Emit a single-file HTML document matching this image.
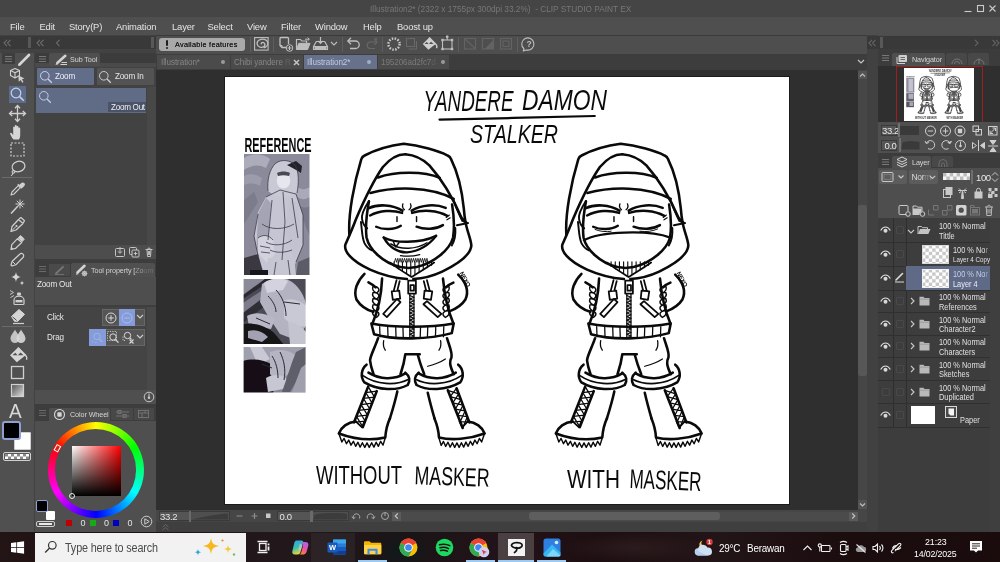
<!DOCTYPE html>
<html><head><meta charset="utf-8"><title>CLIP STUDIO PAINT EX</title>
<style>
*{box-sizing:border-box;margin:0;padding:0}
html,body{width:1000px;height:562px;overflow:hidden;background:#454545;font-family:"Liberation Sans",sans-serif;}
#root{will-change:transform;position:relative;width:1000px;height:562px;overflow:hidden;background:#454545;color:#ddd;font-size:10px}
.a{position:absolute}
.t{position:absolute;white-space:nowrap;line-height:1}
svg{position:absolute;overflow:visible}
.ic{stroke:#c8c8c8;fill:none;stroke-width:1.2;stroke-linecap:round;stroke-linejoin:round}
.mi{font-size:9.4px;letter-spacing:-0.15px;color:#e4e4e4}
.lt{font-size:9px;color:#e0e0e0;transform:scaleX(0.82);transform-origin:0 0}
.tb{font-size:9px;letter-spacing:-0.1px;color:#868686;transform:scaleX(0.9);transform-origin:0 0}
.nx{transform:scaleX(0.9);transform-origin:0 0}
.nx2{transform:scaleX(0.93);transform-origin:0 0}

</style></head><body><div id="root">
<!-- ===== title bar ===== -->
<div class="a" style="left:0;top:0;width:1000px;height:17px;background:#454545"></div>
<div class="t" style="left:370px;top:4.500px;font-size:9.300px;color:#777;transform:scaleX(0.890);transform-origin:0 0">Illustration2* (2322 x 1755px 300dpi 33.2%)&nbsp; - CLIP STUDIO PAINT EX</div>
<svg style="left:960px;top:2px" width="40" height="14"><g stroke="#c9c9c9" stroke-width="1.1" fill="none"><path d="M4.500 9.500h7"/><rect x="17.500" y="3.500" width="6" height="6"/><path d="M29.500 3.500l6 6M35.500 3.500l-6 6"/></g></svg>
<!-- ===== menu bar ===== -->
<div class="a" style="left:0;top:16.700px;width:1000px;height:18.300px;background:#4f4f4f"></div>
<div class="t mi" style="left:10px;top:21.500px">File</div>
<div class="t mi" style="left:39.500px;top:21.500px">Edit</div>
<div class="t mi" style="left:69px;top:21.500px">Story(P)</div>
<div class="t mi" style="left:116px;top:21.500px">Animation</div>
<div class="t mi" style="left:172px;top:21.500px">Layer</div>
<div class="t mi" style="left:207.500px;top:21.500px">Select</div>
<div class="t mi" style="left:247px;top:21.500px">View</div>
<div class="t mi" style="left:281px;top:21.500px">Filter</div>
<div class="t mi" style="left:315px;top:21.500px">Window</div>
<div class="t mi" style="left:363px;top:21.500px">Help</div>
<div class="t mi" style="left:397px;top:21.500px">Boost up</div>

<!-- ===== command bar ===== -->
<div class="a" style="left:156px;top:35px;width:711px;height:19px;background:#4e4e4e"></div>
<div class="a" style="left:156px;top:35px;width:711px;height:1px;background:#3a3a3a"></div>
<div class="a" style="left:159px;top:37.500px;width:86px;height:13.500px;border-radius:3px;background:#a9a9a9"></div>
<div class="a" style="left:165.500px;top:40px;width:2px;height:6px;border-radius:1px;background:#1e1e1e"></div>
<div class="a" style="left:165.500px;top:47px;width:2px;height:2px;border-radius:1px;background:#1e1e1e"></div>
<div class="t nx2" style="left:175px;top:40.500px;font-size:7.800px;letter-spacing:0.300px;color:#1f1f1f;text-shadow:0 0 0.500px #1f1f1f">Available features</div>
<div class="a" style="left:250px;top:37px;width:1px;height:15px;background:#5e5e5e"></div>
<div class="a" style="left:273px;top:37px;width:1px;height:15px;background:#5e5e5e"></div>
<div class="a" style="left:342px;top:37px;width:1px;height:15px;background:#5e5e5e"></div>
<div class="a" style="left:382px;top:37px;width:1px;height:15px;background:#5e5e5e"></div>
<div class="a" style="left:458px;top:37px;width:1px;height:15px;background:#5e5e5e"></div>
<div class="a" style="left:517px;top:37px;width:1px;height:15px;background:#5e5e5e"></div>
<!-- csp spiral -->
<svg style="left:254px;top:37.300px" width="15" height="14" viewBox="0 0 15 14"><rect x="0.600" y="0.600" width="13.500" height="12.500" fill="none" stroke="#bebebe" stroke-width="1.100"/><path d="M7.600 7.300c-1.100-1.200 1.100-2.500 2.400-.9 1.500 1.800-1.100 4-3.800 3.200-2.900-.9-3.300-4.500-.5-6 2.700-1.400 6.500-.6 7.100 1.900.5 2.200-1.300 4.200-3.400 4.800" fill="none" stroke="#bebebe" stroke-width="1.100" transform="translate(-1.400,-1.200) scale(1.180)"/></svg>
<!-- new file -->
<svg style="left:278px;top:36.300px" width="17" height="16" viewBox="0 0 17 16"><path d="M8.500 11.500H4L2 9.500V2.500a1 1 0 0 1 1-1h6.500a1 1 0 0 1 1 1V8" fill="none" stroke="#c0c0c0" stroke-width="1.300"/><path d="M2 9.500h2v2" fill="none" stroke="#c0c0c0" stroke-width="1"/><circle cx="11.500" cy="12" r="3.300" fill="#4e4e4e" stroke="#c0c0c0" stroke-width="1"/><path d="M11.500 10v4M9.500 12h4" stroke="#c0c0c0" stroke-width="1.100"/></svg>
<!-- open folder -->
<svg style="left:295px;top:36.300px" width="17" height="16" viewBox="0 0 17 16"><path d="M1.500 13.500V3.500h4l1.200 1.500h4.800v2" fill="none" stroke="#bebebe" stroke-width="1.200"/><path d="M1.500 13.500l2.300-6.200h11.200l-2.400 6.200z" fill="#bebebe" stroke="#bebebe" stroke-width="1" stroke-linejoin="round"/><path d="M10 3.200h4.200M12.600 1.600l1.700 1.600-1.700 1.600" fill="none" stroke="#bebebe" stroke-width="1"/></svg>
<!-- save -->
<svg style="left:312px;top:36.300px" width="17" height="16" viewBox="0 0 17 16"><path d="M1.500 13.500v-3l2.800-5h8.400l2.800 5v3z" fill="none" stroke="#bebebe" stroke-width="1.200" stroke-linejoin="round"/><path d="M1.500 10.500h14" stroke="#bebebe" stroke-width="1"/><rect x="2.500" y="11" width="12" height="2" fill="#bebebe"/><path d="M8.500 1v6M6.300 5l2.200 2.300L10.700 5" fill="none" stroke="#bebebe" stroke-width="1.200"/></svg>
<svg style="left:330px;top:41.300px" width="8" height="6" viewBox="0 0 8 6"><path d="M1 1l3 3 3-3" fill="none" stroke="#bebebe" stroke-width="1.100"/></svg>
<!-- undo / redo -->
<svg style="left:346px;top:36.300px" width="16" height="16" viewBox="0 0 16 16"><path d="M2 5h7.500a3.700 3.700 0 0 1 0 7.500H4" fill="none" stroke="#bebebe" stroke-width="1.300"/><path d="M5 1.800L1.800 5 5 8.200" fill="none" stroke="#bebebe" stroke-width="1.300"/></svg>
<svg style="left:364px;top:36.300px" width="16" height="16" viewBox="0 0 16 16"><path d="M13 6H6.500a3.200 3.200 0 0 0 0 6.500H11" fill="none" stroke="#686868" stroke-width="1.200"/><path d="M10.500 3.200L13 6l-2.500 2.800" fill="none" stroke="#686868" stroke-width="1.200"/><path d="M12 1.500v3M10.500 3h3" stroke="#686868" stroke-width="0.900"/></svg>
<!-- spinner -->
<svg style="left:386px;top:36.300px" width="16" height="16" viewBox="0 0 16 16"><circle cx="8" cy="8" r="5.600" fill="none" stroke="#c9c9c9" stroke-width="2.400" stroke-dasharray="1.500 1.430"/></svg>
<!-- dim copy -->
<svg style="left:405px;top:37.300px" width="15" height="14" viewBox="0 0 15 14"><rect x="1.500" y="1.500" width="8" height="8" fill="none" stroke="#686868" stroke-width="1.100"/><path d="M11.500 4v8h-8" fill="none" stroke="#686868" stroke-width="1.100"/></svg>
<!-- fill bucket -->
<svg style="left:421px;top:36.300px" width="17" height="16" viewBox="0 0 17 16"><path d="M8.200 1.500L1.800 8l5.600 5.800L14.600 8z" fill="#cfcfcf"/><path d="M3.500 8l2.300-2 2 2.200 2.200-2.400 2.500 2.200z" fill="#4e4e4e"/><path d="M8.200 1.500l6.400 6.500c1.200 1 1.600 2.600 1 4.200" fill="none" stroke="#cfcfcf" stroke-width="1.300"/></svg>
<!-- transform -->
<svg style="left:440px;top:35.300px" width="16" height="17" viewBox="0 0 16 17"><rect x="2.500" y="5" width="9.500" height="9" fill="none" stroke="#bebebe" stroke-width="1.100"/><path d="M7.200 1.500v3.500" stroke="#bebebe" stroke-width="1.100"/><g fill="#bebebe"><rect x="1.300" y="3.800" width="2.400" height="2.400"/><rect x="10.800" y="3.800" width="2.400" height="2.400"/><rect x="1.300" y="12.800" width="2.400" height="2.400"/><rect x="10.800" y="12.800" width="2.400" height="2.400"/><rect x="6" y="0.500" width="2.400" height="2.400"/></g></svg>
<!-- dim 3 icons -->
<svg style="left:463px;top:37.300px" width="52" height="14" viewBox="0 0 52 14"><g fill="none" stroke="#636363" stroke-width="1.100"><rect x="1.500" y="1.500" width="11" height="10.500"/><path d="M1.500 1.500l11 10.500"/><rect x="19.500" y="1.500" width="11" height="10.500"/><rect x="37.500" y="1.500" width="11" height="10.500"/><rect x="40" y="4" width="6" height="5.500"/></g><path d="M30.500 3v9h-9z" fill="#636363"/></svg>
<!-- help -->
<svg style="left:521px;top:36.300px" width="16" height="16" viewBox="0 0 16 16"><path d="M3 12.800A6.100 6.100 0 1 1 5.500 14l-3.300.9z" fill="none" stroke="#bebebe" stroke-width="1.100" stroke-linejoin="round"/><text x="8" y="11.300" font-family="Liberation Sans, sans-serif" font-size="8.500" font-weight="bold" fill="#bebebe" text-anchor="middle">?</text></svg>

<!-- ===== tab bar ===== -->
<div class="a" style="left:156px;top:54px;width:711px;height:16px;background:#3d3d3d"></div>
<div class="a" style="left:157px;top:55px;width:73px;height:14px;background:#4b4b4b"></div>
<div class="a" style="left:231px;top:55px;width:72px;height:14px;background:#4b4b4b"></div>
<div class="a" style="left:304px;top:55px;width:73px;height:14px;background:#67718c"></div>
<div class="a" style="left:378px;top:55px;width:71px;height:14px;background:#4b4b4b"></div>
<div class="t tb" style="left:160.500px;top:57.500px">Illustration*</div>
<div class="a" style="left:221px;top:60px;width:4px;height:4px;border-radius:2px;background:#9a9a9a"></div>
<div class="t tb" style="left:233.500px;top:57.500px">Chibi yandere <span style="color:#626262">R</span></div>
<svg style="left:293px;top:59px" width="7" height="7" viewBox="0 0 7 7"><path d="M1 1l5 5M6 1L1 6" stroke="#c4c4c4" stroke-width="1.500"/></svg>
<div class="t tb" style="left:307px;top:57.500px;color:#c3cae0">Illustration2*</div>
<div class="a" style="left:367px;top:60px;width:4px;height:4px;border-radius:2px;background:#a4adc8"></div>
<div class="t tb" style="left:380.500px;top:57.500px;color:#7a7a7a">195206ad2fc7<span style="color:#5e5e5e">d</span></div>
<div class="a" style="left:440.500px;top:60px;width:4px;height:4px;border-radius:2px;background:#9a9a9a"></div>
<svg style="left:857px;top:59px" width="8" height="6" viewBox="0 0 8 6"><path d="M1 1l3 3 3-3" fill="none" stroke="#c6c6c6" stroke-width="1.200"/></svg>

<!-- ===== left tool palette ===== -->
<div class="a" style="left:0;top:35px;width:156px;height:497px;background:#424242"></div>
<div class="a" style="left:0;top:36px;width:156px;height:13px;background:#393939"></div>
<div class="a" style="left:28px;top:37px;width:3px;height:11px;background:#585858"></div>
<div class="a" style="left:150.500px;top:37px;width:3px;height:11px;background:#585858"></div>
<svg style="left:3px;top:39px" width="60" height="8" viewBox="0 0 60 8"><g fill="none" stroke="#6c6c6c" stroke-width="1.100"><path d="M4 .8L1 4l3 3.200M7.500 .8L4.500 4l3 3.200"/><path d="M37 .8L34 4l3 3.200M40.500 .8L37.500 4l3 3.200"/><path d="M56.500 .8L53.500 4l3 3.200"/></g></svg>
<div class="a" style="left:0;top:53px;width:34px;height:479px;background:#505050"></div>
<div class="a" style="left:2px;top:53px;width:13px;height:11px;background:#3e3e3e"></div>
<svg style="left:4px;top:55px" width="9" height="8" viewBox="0 0 9 8"><path d="M1 1.500h7M1 4h7M1 6.500h7" stroke="#7f7f7f" stroke-width="0.900"/></svg>
<!-- pen tab icon -->
<svg style="left:16px;top:52px" width="17" height="15" viewBox="0 0 17 15"><path d="M3.500 12.500L13 3" stroke="#d6d6d6" stroke-width="2.600" stroke-linecap="round"/><path d="M2 14l1-2.500 1.500 1.500z" fill="#d6d6d6"/></svg>

<!-- selected tool bg -->
<div class="a" style="left:8.500px;top:86px;width:17px;height:17px;background:#5e6b8b"></div>
<!-- tool icons -->
<!-- 3d object -->
<svg style="left:8px;top:66px" width="20" height="19" viewBox="0 0 20 19"><path d="M7 2.500l4.500 2v5L7 12l-4.500-2.500v-5z M2.500 4.500L7 6.800l4.500-2.300M7 6.800V12" fill="none" stroke="#d0d0d0" stroke-width="1.100" stroke-linejoin="round"/><path d="M10.500 9.500l6 3-2.600.8 1.600 2.800-1.300.7-1.500-2.800-2 1.700z" fill="#d0d0d0"/></svg>
<!-- zoom -->
<svg style="left:9px;top:86px" width="17" height="17" viewBox="0 0 17 17"><circle cx="7" cy="7" r="4.800" fill="none" stroke="#c9d2ea" stroke-width="1.200"/><path d="M10.600 10.600l4.200 4.200" stroke="#c9d2ea" stroke-width="1.500"/></svg>
<!-- move -->
<svg style="left:8px;top:104px" width="19" height="19" viewBox="0 0 19 19"><path d="M9.500 2v15M2 9.500h15" stroke="#d0d0d0" stroke-width="1.300"/><path d="M7 4.200L9.500 1.500 12 4.200M7 14.800l2.500 2.700 2.500-2.700M4.200 7L1.500 9.500 4.200 12M14.800 7l2.700 2.500-2.700 2.500" fill="none" stroke="#d0d0d0" stroke-width="1.300"/></svg>
<!-- hand -->
<svg style="left:9px;top:123px" width="17" height="18" viewBox="0 0 17 18"><path d="M4.500 16.500c-1.500-1.500-2.700-3.800-3.300-5.500-.4-1.200 1-1.700 1.700-.7l1.300 1.900V4.300c0-1.200 1.700-1.200 1.700 0V3c0-1.300 1.800-1.300 1.800 0v1c0-1.300 1.800-1.300 1.800 0v1.400c0-1.200 1.700-1.200 1.700 0v6.800c0 1.800-.5 3-1.200 4.300z" fill="#d6d6d6"/></svg>
<!-- select rect -->
<svg style="left:9px;top:141px" width="17" height="17" viewBox="0 0 17 17"><rect x="2" y="2" width="13" height="13" fill="none" stroke="#d0d0d0" stroke-width="1.200" stroke-dasharray="2 1.500"/></svg>
<!-- lasso -->
<svg style="left:9px;top:159px" width="18" height="18" viewBox="0 0 18 18"><ellipse cx="9.500" cy="7.500" rx="6.500" ry="5.200" fill="none" stroke="#d0d0d0" stroke-width="1.200" transform="rotate(-18 9.500 7.500)"/><path d="M5 11.500c-1.500.2-2.300 1.400-1.600 2.300.8.900 2.300.2 2.400-1.200M4 14c-.3 1.300-1 2.200-2 2.700" fill="none" stroke="#d0d0d0" stroke-width="1.100"/></svg>
<div class="a" style="left:2px;top:177px;width:30px;height:1px;background:#6a6a6a"></div>
<!-- eyedropper -->
<svg style="left:9px;top:180px" width="17" height="17" viewBox="0 0 17 17"><path d="M2 15l1-3 6.300-6.300 2 2L5 14z" fill="none" stroke="#d0d0d0" stroke-width="1.100" stroke-linejoin="round"/><path d="M8.800 4.200l4 4M10.500 5.800l2.300-2.300a1.400 1.400 0 0 1 2 2L12.500 7.800" fill="#d0d0d0" stroke="#d0d0d0" stroke-width="1.400" stroke-linejoin="round"/></svg>
<!-- magic wand -->
<svg style="left:9px;top:198px" width="17" height="17" viewBox="0 0 17 17"><path d="M2 15.500l7-7.500" stroke="#d0d0d0" stroke-width="1.500"/><path d="M11 1.500v9M6.500 6h9M7.800 2.800l6.400 6.400M14.200 2.800L7.800 9.200" stroke="#d0d0d0" stroke-width="1"/></svg>
<!-- pen -->
<svg style="left:9px;top:216px" width="17" height="17" viewBox="0 0 17 17"><path d="M2 15.500l1-5 6.500-7 4.500 4-7 6.500z" fill="none" stroke="#d0d0d0" stroke-width="1.200" stroke-linejoin="round"/><path d="M2 15.500l4.800-4.800" stroke="#d0d0d0" stroke-width="1"/><circle cx="7.500" cy="10" r="1.100" fill="#d0d0d0"/><path d="M10 2.800l2-1.300 3.500 3.200-1.300 2.300" fill="none" stroke="#d0d0d0" stroke-width="1.200" stroke-linejoin="round"/></svg>
<!-- pencil/brush -->
<svg style="left:9px;top:234px" width="17" height="17" viewBox="0 0 17 17"><path d="M2 15.500l.8-4.800 5.700-6 4.200 3.800-6 5.800z" fill="none" stroke="#d0d0d0" stroke-width="1.200" stroke-linejoin="round"/><path d="M9 4.200l2.500-2.700 3.800 3.500-2.300 2.800" fill="#d0d0d0" stroke="#d0d0d0" stroke-width="1" stroke-linejoin="round"/><path d="M2 15.500l2.500-.6-1.900-1.800z" fill="#d0d0d0"/></svg>
<!-- marker pill -->
<svg style="left:9px;top:252px" width="17" height="17" viewBox="0 0 17 17"><path d="M3 14l-1-1 1.200-3.800 7.500-7a2.300 2.300 0 0 1 3.300 3.300l-7.200 7.300z" fill="none" stroke="#d0d0d0" stroke-width="1.200" stroke-linejoin="round"/><path d="M3.500 9.500l3.200 3.200" stroke="#d0d0d0" stroke-width="1"/></svg>
<!-- sparkle -->
<svg style="left:9px;top:270px" width="17" height="17" viewBox="0 0 17 17"><path d="M7 1.500c.4 3.500 1.200 4.600 5 5.500-3.800.9-4.600 2-5 5.500-.4-3.500-1.200-4.600-5-5.500 3.800-.9 4.600-2 5-5.500z" fill="#d6d6d6"/><path d="M13 10.500c.2 1.700.7 2.200 2.500 2.600-1.800.4-2.300.9-2.500 2.600-.2-1.700-.7-2.200-2.500-2.600 1.800-.4 2.300-.9 2.500-2.600z" fill="#d6d6d6"/></svg>
<!-- airbrush -->
<svg style="left:8px;top:288px" width="19" height="18" viewBox="0 0 19 18"><path d="M2 2.500l3.500 2L2 6.500M2.500 9.500L6 7.500" fill="none" stroke="#d0d0d0" stroke-width="0.900"/><rect x="9" y="4.500" width="4" height="3" rx="1" fill="#d0d0d0"/><path d="M6 15.500v-3.500c0-2 2-3.800 5-3.800s5 1.800 5 3.800v3.500c0 .6-.4 1-1 1H7c-.6 0-1-.4-1-1z" fill="none" stroke="#d0d0d0" stroke-width="1.200"/><rect x="7.500" y="12" width="7" height="2.400" fill="#d0d0d0"/></svg>
<!-- eraser -->
<svg style="left:9px;top:307px" width="18" height="18" viewBox="0 0 18 18"><path d="M2.500 9.500L10 2.500l5.500 4.800-6.700 7H5.500z" fill="#d6d6d6" stroke="#d6d6d6" stroke-width="1" stroke-linejoin="round"/><path d="M3.500 9.800l4.200 3.700" stroke="#505050" stroke-width="1"/><path d="M4 16.500h11" stroke="#d0d0d0" stroke-width="1.200"/></svg>
<div class="a" style="left:2px;top:326px;width:30px;height:1px;background:#6a6a6a"></div>
<!-- blend -->
<svg style="left:9px;top:328px" width="18" height="18" viewBox="0 0 18 18"><path d="M6 1.500c1 2.500 4.500 5.500 4.500 9a4.500 4.500 0 0 1-9 0c0-3.500 3.500-6.500 4.500-9z" fill="#c4c4c4"/><path d="M12 1.500c1 2.500 4.500 5.500 4.500 9a4.500 4.500 0 0 1-9 0c0-3.500 3.500-6.500 4.500-9z" fill="#d8d8d8" opacity="0.900"/></svg>
<!-- fill -->
<svg style="left:8px;top:346px" width="20" height="18" viewBox="0 0 20 18"><path d="M10 1.500L2 9.300l6.800 7L17.600 9.300z" fill="#d6d6d6"/><path d="M4.500 9.300l2.800-2.600 2.400 2.800 2.800-3 3 2.800z" fill="#505050"/><path d="M10 1.500l7.600 7.800c1.200 1.300 1.600 2.800 1 4.400" fill="none" stroke="#d6d6d6" stroke-width="1.400"/></svg>
<!-- rectangle -->
<svg style="left:9px;top:364px" width="17" height="17" viewBox="0 0 17 17"><rect x="2.500" y="2.500" width="12" height="12" fill="none" stroke="#d0d0d0" stroke-width="1.300"/></svg>
<!-- gradient -->
<svg style="left:9px;top:382px" width="17" height="17" viewBox="0 0 17 17"><defs><linearGradient id="gg" x1="0" y1="0" x2="1" y2="1"><stop offset="0" stop-color="#505050"/><stop offset="1" stop-color="#e0e0e0"/></linearGradient></defs><rect x="2.500" y="2.500" width="12" height="12" fill="url(#gg)" stroke="#d0d0d0" stroke-width="1.200"/></svg>
<!-- text A -->
<div class="t" style="left:9px;top:401px;font-size:20px;color:#d8d8d8;transform:scaleX(.95);transform-origin:0 0">A</div>
<!-- colour swatches -->
<div class="a" style="left:14px;top:432px;width:17px;height:18px;background:#fff;border:1px solid #cfcfcf;border-radius:1px"></div>
<div class="a" style="left:2px;top:421px;width:19px;height:19px;background:#000;border:2px solid #8ea0cf;border-radius:3px"></div>
<div class="a" style="left:3px;top:452px;width:28px;height:9px;border:1px solid #cfcfcf;border-radius:2px;background:#5a5a5a"></div>
<svg style="left:5px;top:454px" width="24" height="5" viewBox="0 0 24 5"><rect width="24" height="5" fill="#fff"/><g fill="#8a8a8a"><rect x="0" y="0" width="3" height="2.500"/><rect x="6" y="0" width="3" height="2.500"/><rect x="12" y="0" width="3" height="2.500"/><rect x="18" y="0" width="3" height="2.500"/><rect x="3" y="2.500" width="3" height="2.500"/><rect x="9" y="2.500" width="3" height="2.500"/><rect x="15" y="2.500" width="3" height="2.500"/><rect x="21" y="2.500" width="3" height="2.500"/></g></svg>

<!-- ===== sub tool panel ===== -->
<div class="a" style="left:35px;top:53px;width:121px;height:13px;background:#3c3c3c"></div>
<div class="a" style="left:35px;top:63px;width:121px;height:4px;background:#4a4a4a"></div>
<div class="a" style="left:35px;top:67px;width:121px;height:178px;background:#424242"></div>
<svg style="left:38px;top:55px" width="9" height="8" viewBox="0 0 9 8"><path d="M1 1.500h7M1 4h7M1 6.500h7" stroke="#7f7f7f" stroke-width="0.900"/></svg>
<div class="a" style="left:49px;top:53px;width:51px;height:13px;background:#4f4f4f;border-radius:2px 2px 0 0"></div>
<!-- sub tool tab icon -->
<svg style="left:54px;top:53px" width="15" height="13" viewBox="0 0 15 13"><path d="M3.500 9.800L11.300 2.800" stroke="#d2d2d2" stroke-width="2.600" stroke-linecap="round"/><path d="M1.500 12l1-2.600 1.800 1.800z" fill="#d2d2d2"/><path d="M7.500 9.500h5.500M6.500 11.500h6.500" stroke="#d2d2d2" stroke-width="1" fill="none"/></svg>
<div class="t nx" style="left:69.500px;top:56px;font-size:8px;color:#d6d6d6;letter-spacing:-0.1px">Sub Tool</div>
<!-- group buttons -->
<div class="a" style="left:37px;top:68px;width:57px;height:17px;background:#626d89;border-radius:1px"></div>
<div class="a" style="left:97px;top:68px;width:57px;height:17px;background:#535353;border-radius:1px"></div>
<svg style="left:39px;top:70px" width="14" height="14" viewBox="0 0 14 14"><circle cx="5.800" cy="5.800" r="4.300" fill="none" stroke="#cbd3ea" stroke-width="1"/><path d="M9 9l3.800 3.800" stroke="#cbd3ea" stroke-width="1.300"/></svg>
<svg style="left:98px;top:70px" width="14" height="14" viewBox="0 0 14 14"><circle cx="5.800" cy="5.800" r="4.300" fill="none" stroke="#cfcfcf" stroke-width="1"/><path d="M9 9l3.800 3.800" stroke="#cfcfcf" stroke-width="1.300"/></svg>
<div class="t nx" style="left:54.500px;top:72px;font-size:9px;color:#eef0f8;letter-spacing:-0.2px">Zoom</div>
<div class="t nx" style="left:114.500px;top:72px;font-size:9px;color:#e8e8e8;letter-spacing:-0.2px">Zoom In</div>
<div class="a" style="left:147px;top:87px;width:9px;height:158px;background:#484848"></div>
<!-- list item -->
<div class="a" style="left:36px;top:88px;width:110px;height:25px;background:#606b86"></div>
<svg style="left:38px;top:90px" width="14" height="14" viewBox="0 0 14 14"><circle cx="5.800" cy="5.800" r="4.300" fill="none" stroke="#c3cce4" stroke-width="1"/><path d="M9 9l3.800 3.800" stroke="#c3cce4" stroke-width="1.300"/></svg>
<div class="a" style="left:108px;top:102px;width:38px;height:10px;background:#4b5369"></div>
<div class="t nx" style="left:110.500px;top:102.500px;font-size:9px;color:#f0f0f0;letter-spacing:-0.3px">Zoom Out</div>
<!-- footer -->
<div class="a" style="left:35px;top:245px;width:121px;height:14px;background:#4d4d4d"></div>
<svg style="left:114px;top:246px" width="42" height="12" viewBox="0 0 42 12"><g fill="none" stroke="#c4c4c4" stroke-width="1"><rect x="1.500" y="2.500" width="9" height="8" rx="1"/><path d="M6 1v6M4 5.300l2 2 2-2"/><rect x="15.500" y="1.500" width="7" height="7" rx="1"/><rect x="18" y="4" width="7" height="7" rx="1" fill="#4d4d4d"/><path d="M21.500 5.800v3.500M19.800 7.500h3.500"/><path d="M31.500 3.500h7M33 3.500l.5 7h3l.5-7M33.800 3.300c0-1.800 2.400-1.800 2.400 0M34.400 5v4M35.600 5v4"/></g></svg>

<!-- ===== tool property ===== -->
<div class="a" style="left:35px;top:259px;width:121px;height:4px;background:#3d3d3d"></div>
<div class="a" style="left:35px;top:263px;width:121px;height:14px;background:#3d3d3d"></div>
<svg style="left:38px;top:265px" width="9" height="8" viewBox="0 0 9 8"><path d="M1 1.500h7M1 4h7M1 6.500h7" stroke="#6f6f6f" stroke-width="0.900"/></svg>
<div class="a" style="left:49px;top:264px;width:21px;height:12px;background:#4a4a4a"></div>
<svg style="left:54px;top:265px" width="12" height="10" viewBox="0 0 12 10"><path d="M2 8.500L9 1.800" stroke="#777" stroke-width="1.800" stroke-linecap="round"/><path d="M1 9.500h9" stroke="#777" stroke-width="0.800"/></svg>
<div class="a" style="left:71px;top:263px;width:84px;height:14px;background:#505050;border-radius:2px 2px 0 0"></div>
<svg style="left:75px;top:263px" width="14" height="14" viewBox="0 0 14 14"><path d="M2.500 9.500L9.500 2.800" stroke="#d2d2d2" stroke-width="2.600" stroke-linecap="round"/><path d="M1 12l1-2.500 1.600 1.600z" fill="#d2d2d2"/><circle cx="9.500" cy="10.500" r="2" fill="none" stroke="#d2d2d2" stroke-width="1"/><path d="M9.500 7.500v6M6.500 10.500h6M7.400 8.400l4.200 4.200M11.600 8.400l-4.200 4.200" stroke="#d2d2d2" stroke-width="0.700"/></svg>
<div class="t nx" style="left:91px;top:266.500px;font-size:8px;color:#d2d2d2;letter-spacing:-0.1px">Tool property [<span style="color:#9a9a9a">Zo</span><span style="color:#707070">om</span></div>
<div class="a" style="left:35px;top:277px;width:121px;height:28px;background:#4e4e4e"></div>
<div class="t nx" style="left:36.500px;top:279.500px;font-size:9px;color:#e6e6e6;letter-spacing:-0.2px">Zoom Out</div>
<div class="a" style="left:35px;top:305px;width:121px;height:2px;background:#3f3f3f"></div>
<div class="a" style="left:35px;top:307px;width:121px;height:83px;background:#444444"></div>
<div class="a" style="left:147px;top:307px;width:9px;height:83px;background:#494949"></div>
<div class="t nx" style="left:47px;top:313px;font-size:9px;color:#e6e6e6;letter-spacing:-0.2px">Click</div>
<div class="t nx" style="left:47px;top:333px;font-size:9px;color:#e6e6e6;letter-spacing:-0.2px">Drag</div>
<!-- click buttons -->
<div class="a" style="left:102px;top:309px;width:43px;height:17px;background:#555;border:1px solid #666"></div>
<div class="a" style="left:118.500px;top:309px;width:16.500px;height:17px;background:#869cd8"></div>
<svg style="left:104px;top:311px" width="14" height="14" viewBox="0 0 14 14"><circle cx="7" cy="7" r="5" fill="none" stroke="#d8d8d8" stroke-width="1"/><path d="M7 4.200v5.600M4.200 7h5.600" stroke="#d8d8d8" stroke-width="1"/></svg>
<svg style="left:120px;top:311px" width="14" height="14" viewBox="0 0 14 14"><circle cx="7" cy="7" r="5" fill="none" stroke="#a9bcf0" stroke-width="1"/><path d="M4.200 7h5.600" stroke="#a9bcf0" stroke-width="1"/></svg>
<svg style="left:136px;top:314px" width="8" height="6" viewBox="0 0 8 6"><path d="M1 1l3 3 3-3" fill="none" stroke="#d0d0d0" stroke-width="1.100"/></svg>
<!-- drag buttons -->
<div class="a" style="left:89px;top:329px;width:56px;height:17px;background:#555;border:1px solid #666"></div>
<div class="a" style="left:89px;top:329px;width:16.500px;height:17px;background:#869cd8"></div>
<svg style="left:90px;top:330px" width="15" height="15" viewBox="0 0 15 15"><circle cx="7" cy="6.500" r="3.200" fill="none" stroke="#9db2ee" stroke-width="1"/><path d="M9.300 9l3 3" stroke="#9db2ee" stroke-width="1.200"/><path d="M2 11.500h1.500M5 12.500h1.500" stroke="#9db2ee" stroke-width="0.800"/></svg>
<svg style="left:106px;top:330px" width="15" height="15" viewBox="0 0 15 15"><rect x="1.500" y="1.500" width="9" height="9" fill="none" stroke="#d0d0d0" stroke-width="0.900" stroke-dasharray="1.200 1.200"/><circle cx="7" cy="7" r="3.200" fill="none" stroke="#d8d8d8" stroke-width="1"/><path d="M9.300 9.500l3.200 3.200" stroke="#d8d8d8" stroke-width="1.200"/></svg>
<svg style="left:121px;top:330px" width="15" height="15" viewBox="0 0 15 15"><circle cx="6.500" cy="5.500" r="3.200" fill="none" stroke="#d8d8d8" stroke-width="1"/><path d="M9 8l1.500 1.500" stroke="#d8d8d8" stroke-width="1.100"/><path d="M2 6.500v4h3" fill="none" stroke="#d0d0d0" stroke-width="0.900" stroke-dasharray="1.200 1.200"/><path d="M8.500 9.500l4 4M12.500 9.500l-4 4" stroke="#d8d8d8" stroke-width="1.100"/></svg>
<svg style="left:136px;top:334px" width="8" height="6" viewBox="0 0 8 6"><path d="M1 1l3 3 3-3" fill="none" stroke="#d0d0d0" stroke-width="1.100"/></svg>
<!-- footer 2 -->
<div class="a" style="left:35px;top:390px;width:121px;height:14px;background:#4f4f4f"></div>
<svg style="left:143px;top:391px" width="12" height="12" viewBox="0 0 12 12"><circle cx="6" cy="6" r="4.800" fill="none" stroke="#c8c8c8" stroke-width="1"/><path d="M6 2.500v3.500" stroke="#c8c8c8" stroke-width="1"/><circle cx="6" cy="6.800" r="1.200" fill="#c8c8c8"/></svg>
<div class="a" style="left:35px;top:404px;width:121px;height:3px;background:#3d3d3d"></div>

<!-- ===== colour wheel panel ===== -->
<div class="a" style="left:35px;top:407px;width:121px;height:14px;background:#3d3d3d"></div>
<div class="a" style="left:35px;top:421px;width:121px;height:111px;background:#4f4f4f"></div>
<svg style="left:38px;top:409px" width="9" height="8" viewBox="0 0 9 8"><path d="M1 1.500h7M1 4h7M1 6.500h7" stroke="#6f6f6f" stroke-width="0.900"/></svg>
<div class="a" style="left:49px;top:408px;width:61px;height:13px;background:#4f4f4f;border-radius:2px 2px 0 0"></div>
<svg style="left:53px;top:408px" width="13" height="13" viewBox="0 0 13 13"><circle cx="6.500" cy="6.500" r="5" fill="none" stroke="#d6d6d6" stroke-width="1.100"/><rect x="4.300" y="4.300" width="4.400" height="4.400" rx="0.800" fill="#d6d6d6"/></svg>
<div class="t nx" style="left:69.500px;top:410.500px;font-size:8px;color:#d6d6d6;letter-spacing:-0.1px">Color Wheel</div>
<div class="a" style="left:111px;top:408px;width:22px;height:12px;background:#484848"></div>
<div class="a" style="left:134px;top:408px;width:20px;height:12px;background:#484848"></div>
<svg style="left:114px;top:409px" width="38" height="10" viewBox="0 0 38 10"><g fill="none" stroke="#767676" stroke-width="0.900"><path d="M2 3h13M2 7h13"/><rect x="4" y="1.500" width="3" height="3"/><rect x="9" y="5.500" width="3" height="3"/><rect x="24.500" y="1.500" width="10" height="7"/><path d="M24.500 4h10M28 4v4.500M31 1.500V4"/></g></svg>
<!-- wheel -->
<div class="a" style="left:47.500px;top:421.700px;width:96.600px;height:96.600px;border-radius:50%;background:conic-gradient(from 300deg,#ff0000,#ffff00,#00ff00,#00ffff,#0000ff,#ff00ff,#ff0000)"></div>
<div class="a" style="left:55.200px;top:429.400px;width:81.200px;height:81.200px;border-radius:50%;background:#4f4f4f"></div>
<div class="a" style="left:71.600px;top:446px;width:49.800px;height:49.500px;background:linear-gradient(to bottom,rgba(0,0,0,0),#000),linear-gradient(to right,#fff,#ff0000)"></div>
<div class="a" style="left:54px;top:445.500px;width:6.500px;height:5px;border:1.200px solid #fff;background:#e02018;transform:rotate(-60deg)"></div>
<div class="a" style="left:68.500px;top:492.500px;width:6px;height:6px;border-radius:50%;border:1px solid #e8e8e8"></div>
<!-- small swatches -->
<div class="a" style="left:45.500px;top:510.500px;width:9px;height:9px;background:#fff;border-radius:1px"></div>
<div class="a" style="left:36px;top:499.500px;width:12px;height:12px;background:#000;border:1.500px solid #8ea0cf;border-radius:2px"></div>
<div class="a" style="left:36px;top:521px;width:19px;height:6px;border:1px solid #d0d0d0;border-radius:2px"></div>
<div class="a" style="left:39px;top:523px;width:13px;height:2px;background:#e8e8e8"></div>
<div class="a" style="left:66px;top:520px;width:5.500px;height:5.500px;background:#c00000"></div>
<div class="a" style="left:90px;top:520px;width:5.500px;height:5.500px;background:#18a818"></div>
<div class="a" style="left:113px;top:520px;width:5.500px;height:5.500px;background:#0000c0"></div>
<div class="t" style="left:80.500px;top:518.500px;font-size:9px;color:#e4e4e4">0</div>
<div class="t" style="left:104px;top:518.500px;font-size:9px;color:#e4e4e4">0</div>
<div class="t" style="left:127.500px;top:518.500px;font-size:9px;color:#e4e4e4">0</div>
<svg style="left:140px;top:515px" width="13" height="13" viewBox="0 0 13 13"><circle cx="6.500" cy="6.500" r="5.300" fill="none" stroke="#cfcfcf" stroke-width="1"/><path d="M4.800 3.800v5.400l4.400-2.700z" fill="none" stroke="#cfcfcf" stroke-width="1" stroke-linejoin="round"/></svg>

<!-- ===== canvas area ===== -->
<div class="a" style="left:156px;top:70px;width:702px;height:440px;background:#2f2f2f"></div>
<div class="a" style="left:224px;top:76px;width:566px;height:428.500px;background:#1b1b1b"></div>
<div class="a" style="left:225px;top:77px;width:564px;height:426.500px;background:#fff"></div>
<!-- v scrollbar -->
<div class="a" style="left:858px;top:70px;width:9px;height:440px;background:#464646"></div>
<div class="a" style="left:858px;top:71px;width:9px;height:8px;background:#535353"></div>
<svg style="left:859px;top:72px" width="7" height="6" viewBox="0 0 7 6"><path d="M1 4.500l2.500-2.500L6 4.500" fill="none" stroke="#bdbdbd" stroke-width="1.200"/></svg>
<div class="a" style="left:858px;top:205px;width:9px;height:171px;background:#575757;border-radius:2px"></div>
<div class="a" style="left:858px;top:500px;width:9px;height:9px;background:#535353"></div>
<svg style="left:859px;top:502px" width="7" height="6" viewBox="0 0 7 6"><path d="M1 1.500l2.500 2.500L6 1.500" fill="none" stroke="#bdbdbd" stroke-width="1.200"/></svg>
<!-- bottom status bar -->
<div class="a" style="left:156px;top:510px;width:711px;height:12px;background:#464646"></div>
<div class="a" style="left:156px;top:522px;width:711px;height:10px;background:#3f3f3f"></div>
<div class="a" style="left:867px;top:35px;width:11px;height:497px;background:#414141"></div>
<svg style="left:0;top:0" width="1000" height="562" viewBox="0 0 1000 562">
<defs><filter id="bl" x="-5%" y="-5%" width="110%" height="110%"><feGaussianBlur stdDeviation="0.7"/></filter><clipPath id="c1"><rect x="244" y="154" width="65.500" height="121"/></clipPath><clipPath id="c2"><rect x="243.600" y="279" width="62" height="65"/></clipPath><clipPath id="c3"><rect x="243.600" y="347" width="62" height="45.500"/></clipPath></defs>
<g clip-path="url(#c1)"><g filter="url(#bl)"><rect x="242" y="152" width="70" height="125" fill="#8b8a9a"/><path d="M244 158c8-5 18-5 26 1l-4 9c-8-4-14-3-22 2z" fill="#adacbb"/><path d="M244 176c6-3 12-2 18 2l-2 8c-6-3-10-3-16-1z" fill="#9d9cac"/><path d="M296 186c5 4 9 4 14 1v10c-5 3-9 3-14-1z" fill="#aaa9b9"/><path d="M300 206c4 2 7 2 10 0v30c-4-8-8-18-10-30z" fill="#787789"/><path d="M244 200l10-8 4 10-14 22z" fill="#7c7b8c"/><path d="M266 197l14-7 16 4 7 21v30l-7 17-6 13h-28l-4-20-4-20 4-23z" fill="#c6c5d3"/><path d="M288 200l10 3 4 38-8 20-8-28z" fill="#c3c2d0"/><path d="M258 214l8-16 5 5-3 40-12 14z" fill="#a5a4b5"/><path d="M268 191c-1-10 1-22 8-28 6-4 14-3 19 2 4 6 4 18 2 28-8 6-20 6-29-2z" fill="#c9c8d5"/><ellipse cx="283.500" cy="180.500" rx="6.800" ry="8" fill="#e6e6ee"/><path d="M277 173c4-2 9-2 13 0l-1 3c-4-1-7-1-11 0z" fill="#4a4955"/><path d="M287 165l9-4 6 5-1 7c-4-3-9-5-14-8z" fill="#232229"/><path d="M258 238c5-4 11-3 15 2l2 14-8 9-9-10z" fill="#d2d1dc"/><path d="M268 258h26l2 17h-30z" fill="#c6c5d2"/><path d="M244 258l14-4 6 21h-20z" fill="#3a3942"/><path d="M250 270h18v5h-18z" fill="#18171c"/><path d="M298 262l12-5v18h-14z" fill="#5c5b67"/><g fill="none" stroke="#3c3b47" stroke-width="0.800"><path d="M266 197l14-7 16 4 7 21v30l-7 17M268 191c-1-10 1-22 8-28 6-4 14-3 19 2 4 6 4 18 2 28M283 192l2 30-3 38M262 224c8 6 22 6 32 0M266 242c6 4 18 4 26-2M258 214l-4 22 4 20M272 200l-4 40M292 198l6 40M270 250c6 3 14 3 22 0M276 262l-2 13M288 260l2 15M258 238c5-4 11-3 15 2M260 246l10 2M261 252l9 1"/></g></g></g>
<g clip-path="url(#c2)"><g filter="url(#bl)"><rect x="242" y="277" width="66" height="69" fill="#4c4b56"/><path d="M243 279h22l-22 20z" fill="#8b8a99"/><path d="M243 299l30-20h-8l-22 16z" fill="#2b2a31"/><path d="M243 303l36-24h10l-46 34z" fill="#7c7b8a"/><path d="M243 313l40-30 4 6-44 34z" fill="#2e2d35"/><path d="M262 284c8-6 22-8 30-2 8 6 12 14 14 22v22l-10 14-16-6-12-18-8-14z" fill="#b4b3c2"/><path d="M264 283c6-5 18-6 24-2l-5 9-16 3z" fill="#d3d2de"/><path d="M284 300c8-2 16 0 22 6v20c-8 2-16-2-22-8z" fill="#c9c8d5"/><path d="M247 316c8-5 20-3 28 3l-4 10-22-3z" fill="#b8b7c6"/><path d="M243 324c10-2 24 2 32 10l10 12h-42z" fill="#131217"/><path d="M243 338l30 8h-30z" fill="#131217"/><path d="M248 331c8-2 14 0 20 6l-6 5-14-4z" fill="#a3a2b2"/><path d="M288 322c7 0 13 4 18 10v12h-16z" fill="#c4c3d0"/><path d="M268 296c4 4 8 10 8 16M276 290c6 6 10 16 10 26M256 318l14 6M284 302l16 2" fill="none" stroke="#2a2930" stroke-width="1"/></g></g>
<g clip-path="url(#c3)"><g filter="url(#bl)"><rect x="242" y="345" width="66" height="50" fill="#878695"/><path d="M243 347h62v10l-30 10-32-6z" fill="#a09fae"/><path d="M250 347l12 0 8 12-12 6z" fill="#c9c8d5"/><path d="M243 361c10-3 22-1 30 4l4 12-4 16h-30z" fill="#121116"/><path d="M270 352c10-4 20-2 26 4l-4 14-14 14-8-10z" fill="#b5b4c3"/><path d="M266 378c6-4 14-4 20 0l2 10-20 4z" fill="#c7c6d3"/><path d="M296 352l10-5v18l-16 27h-8c5-14 9-28 14-40z" fill="#5f5e6b"/><path d="M301 368l5-4v28h-14z" fill="#a09fae"/><path d="M272 356c4 6 6 14 6 22M280 352c4 8 6 18 4 28M262 364l10 4" fill="none" stroke="#2a2930" stroke-width="1"/></g></g>
<g transform="translate(0,0)" fill="none" stroke="#0a0a0a" stroke-linecap="round" stroke-linejoin="round">
<g transform="translate(330,135) scale(0.16026)" stroke-width="16"><path d="M121,622 C112,500 150,300 195,152 Q200,135 216,128 C280,95 380,65 460,55 C560,65 680,100 734,128 Q750,135 756,152 C800,240 825,360 835,460 C838,500 842,525 846,545 C855,600 880,650 882,690 C878,735 830,790 700,852 C640,880 580,895 520,899" /><path d="M470,120 C430,120 380,140 330,200 C262,298 205,425 160,530 C140,585 115,640 96,683 C86,722 125,782 250,840 C340,880 430,895 480,899" /><path d="M470,120 C530,125 580,150 620,190 C700,280 770,400 820,515 L846,545" /><path d="M300,265 C400,230 580,222 685,268" /><path d="M252,362 C400,322 620,318 772,398" /></g>
<g transform="translate(330,195) scale(0.16026)" stroke-width="16"><path d="M243,40 C228,120 220,200 228,265 C245,340 330,425 440,450 Q490,460 540,450 C650,425 748,340 768,265 C778,200 775,140 762,60" /><path d="M243,37 C215,80 195,125 200,150 C205,180 215,195 232,208" stroke-width="12"/><path d="M193,168 C200,220 200,270 215,300 C228,325 245,338 262,345" stroke-width="12"/><path d="M772,36 C790,90 810,130 826,162 L862,175 L792,189" stroke-width="12"/><path d="M782,206 C785,250 775,290 760,315" stroke-width="12"/></g>
<g transform="translate(330,265) scale(0.16026)" stroke-width="16"><path d="M215,55 C170,100 145,160 165,215 C190,255 230,280 270,292" /><path d="M240,108 C260,118 275,130 285,140" /><path d="M800,60 C850,110 870,160 845,215 C820,255 780,275 748,288" /><path d="M770,110 C750,118 735,128 722,140" /><path d="M325,85 C322,160 310,260 265,365" /><path d="M705,85 C712,160 725,260 770,365" /><path d="M258,365 C400,392 620,392 772,365 L760,425 C620,465 400,470 275,432 Z" /><path d="M310,385 L312,448 M360,385 L362,448 M410,385 L412,448 M455,385 L457,448 M565,385 L563,448 M610,385 L608,448 M660,385 L658,448 M710,385 L708,448 " stroke-width="8"/><path d="M498,180 L498,455 M524,180 L524,455" stroke-width="8"/><path d="M498,190 L524,201 L498,212 M498,212 L524,223 L498,234 M498,234 L524,245 L498,256 M498,256 L524,267 L498,278 M498,278 L524,289 L498,300 M498,300 L524,311 L498,322 M498,322 L524,333 L498,344 M498,344 L524,355 L498,366 M498,366 L524,377 L498,388 M498,388 L524,399 L498,410 M498,410 L524,421 L498,432 M498,432 L524,443 L498,454 " stroke-width="7"/><path d="M488,98 L536,98 L536,178 L488,178 Z M502,125 L524,125 L524,160 L502,160 Z" stroke-width="11"/><path d="M415,95 L398,160 M435,100 L420,160 M385,165 L432,160 L438,210 L392,218 Z" stroke-width="11"/><path d="M605,95 L622,160 M585,100 L600,160 M590,160 L638,165 L630,218 L585,210 Z" stroke-width="11"/><path d="M418,212 L440,232 L355,325 L332,305 Z" stroke-width="11"/><path d="M605,225 L583,245 L672,325 L695,305 Z" stroke-width="11"/><path d="M268,135 C300,130 320,155 290,175 C270,165 262,150 268,135 M268,173 C300,168 320,193 290,213 C270,203 262,188 268,173 M268,211 C300,206 320,231 290,251 C270,241 262,226 268,211 M268,249 C300,244 320,269 290,289 C270,279 262,264 268,249 M268,287 C300,282 320,307 290,327 C270,317 262,302 268,287 " stroke-width="9"/><path d="M742,135 C710,130 690,155 720,175 C740,165 748,150 742,135 M742,173 C710,168 690,193 720,213 C740,203 748,188 742,173 M742,211 C710,206 690,231 720,251 C740,241 748,226 742,211 M742,249 C710,244 690,269 720,289 C740,279 748,264 742,249 M742,287 C710,282 690,307 720,327 C740,317 748,302 742,287 " stroke-width="9"/><path d="M375,-15 C420,20 470,50 510,75 C550,50 600,20 650,-15" stroke-width="11"/><path d="M400,-20 L400,9 M426,-20 L426,24 M452,-20 L452,38 M478,-20 L478,52 M504,-20 L504,67 M530,-20 L530,59 M556,-20 L556,45 M582,-20 L582,30 M608,-20 L608,16 M634,-20 L634,2 " stroke-width="7"/></g>
<g transform="translate(330,335) scale(0.16026)" stroke-width="16"><path d="M300,20 C280,80 250,130 250,160 C255,200 265,225 272,245" /><path d="M730,20 C745,70 765,110 758,140 C745,165 745,185 772,245" /><path d="M470,120 L560,120 M470,120 C465,160 455,200 440,245 M548,125 C560,170 572,205 588,245" /><path d="M335,35 C330,60 335,80 345,95 M690,35 C695,60 690,80 680,95 M610,195 C650,185 690,170 720,150" stroke-width="8"/><path d="M228,185 C195,210 188,262 215,296 C300,348 420,348 485,312 C502,285 497,255 470,235" /><path d="M240,235 C310,278 400,282 470,240" /><path d="M203,252 C290,312 410,318 492,276" stroke-width="11"/><path d="M800,185 C832,210 838,262 812,296 C725,348 605,348 540,312 C523,285 528,255 553,235" /><path d="M785,235 C715,278 625,282 553,240" /><path d="M822,252 C735,312 615,318 533,276" stroke-width="11"/><path d="M238,322 L150,545 M292,350 L205,575 M420,352 C405,420 388,475 374,520" /><path d="M610,360 C625,425 640,478 652,520 M735,345 L828,580 M790,332 L870,545" /><path d="M238,322 L278,388 M292,350 L223,359 M223,359 L263,425 M278,388 L209,396 M209,396 L248,462 M263,425 L194,434 M194,434 L234,500 M248,462 L179,471 M179,471 L220,538 M234,500 L165,508 M165,508 L205,575 M220,538 L150,545 M735,345 L803,368 M790,332 L750,384 M750,384 L817,403 M803,368 L766,423 M766,423 L830,438 M817,403 L782,462 M782,462 L843,474 M830,438 L797,502 M797,502 L857,510 M843,474 L812,541 M812,541 L870,545 M857,510 L828,580 " stroke-width="8"/></g>
<g transform="translate(330,395) scale(0.16026)" stroke-width="16"><path d="M160,165 C110,170 70,200 55,240 C150,275 260,285 345,265 C348,225 356,185 374,146" /><path d="M160,165 L200,202 L215,165" stroke-width="11"/><path d="M860,165 C910,170 950,200 965,240 C870,275 760,285 680,265 C678,225 668,185 652,146" /><path d="M860,165 L825,202 L808,165" stroke-width="11"/><path d="M56,242 L74,293 L88,271 L103,304 L117,281 L131,313 L146,289 L160,320 L174,295 L188,325 L202,298 L217,327 L231,299 L245,327 L260,298 L274,325 L288,295 L302,320 L316,289 L331,313 L345,267 " stroke-width="9"/><path d="M964,242 L946,293 L932,271 L918,304 L904,281 L890,313 L876,289 L862,320 L848,294 L834,325 L820,298 L806,327 L792,299 L778,327 L764,298 L750,325 L736,295 L722,321 L708,290 L694,315 L680,269 " stroke-width="9"/></g>
<g transform="translate(330,195) scale(0.16026)" stroke-width="16"><path d="M243,82 C300,55 390,60 452,98" stroke-width="16"/><path d="M250,128 C310,95 390,92 450,112" stroke-width="15"/><path d="M288,198 C330,218 400,218 442,192" stroke-width="15"/><path d="M418,135 L418,165 M540,135 L540,165" stroke-width="9"/><path d="M455,55 C450,70 455,85 465,92 M502,55 C508,70 503,85 493,92" stroke-width="8"/><path d="M510,98 C570,60 660,55 722,80" stroke-width="16"/><path d="M512,112 C580,90 670,95 732,130" stroke-width="15"/><path d="M540,198 C590,218 660,215 705,188" stroke-width="15"/><path d="M725,140 L745,125 M730,155 L750,142" stroke-width="7"/><path d="M335,265 C400,300 560,305 662,255" stroke-width="15"/><path d="M335,265 C370,330 430,360 480,358 C560,350 620,310 662,255" stroke-width="15"/><path d="M380,305 C440,345 540,340 605,298" stroke-width="9"/><path d="M395,290 L410,325 L430,298" stroke-width="9"/><path d="M440,378 C480,385 520,383 560,372" stroke-width="8"/><path d="M402,420 L409,395 L416,420 L423,395 L430,420 L437,395 L444,420 L451,395 L458,420 L465,395 L472,420 L479,395 L486,420 L493,395 L500,420 L507,395 L514,420 L521,395 L528,420 L535,395 L542,420 L549,395 L556,420 L563,395 L570,420 L577,395 L584,420 L591,395 L598,420 L605,395 L612,420 " stroke-width="5"/></g>
<text x="0" y="0" transform="translate(459.500,273) rotate(62)" font-family="Liberation Sans, sans-serif" font-size="6" font-weight="bold" fill="#0a0a0a" stroke="none" letter-spacing="-0.2">NEXO</text>
</g>
<g transform="translate(217,0)" fill="none" stroke="#0a0a0a" stroke-linecap="round" stroke-linejoin="round">
<g transform="translate(330,135) scale(0.16026)" stroke-width="16"><path d="M121,622 C112,500 150,300 195,152 Q200,135 216,128 C280,95 380,65 460,55 C560,65 680,100 734,128 Q750,135 756,152 C800,240 825,360 835,460 C838,500 842,525 846,545 C855,600 880,650 882,690 C878,735 830,790 700,852 C640,880 580,895 520,899" /><path d="M470,120 C430,120 380,140 330,200 C262,298 205,425 160,530 C140,585 115,640 96,683 C86,722 125,782 250,840 C340,880 430,895 480,899" /><path d="M470,120 C530,125 580,150 620,190 C700,280 770,400 820,515 L846,545" /><path d="M300,265 C400,230 580,222 685,268" /><path d="M252,362 C400,322 620,318 772,398" /></g>
<g transform="translate(330,195) scale(0.16026)" stroke-width="16"><path d="M243,40 C228,120 220,200 228,265 C245,340 330,425 440,450 Q490,460 540,450 C650,425 748,340 768,265 C778,200 775,140 762,60" /><path d="M243,37 C215,80 195,125 200,150 C205,180 215,195 232,208" stroke-width="12"/><path d="M193,168 C200,220 200,270 215,300 C228,325 245,338 262,345" stroke-width="12"/><path d="M772,36 C790,90 810,130 826,162 L862,175 L792,189" stroke-width="12"/><path d="M782,206 C785,250 775,290 760,315" stroke-width="12"/></g>
<g transform="translate(330,265) scale(0.16026)" stroke-width="16"><path d="M215,55 C170,100 145,160 165,215 C190,255 230,280 270,292" /><path d="M240,108 C260,118 275,130 285,140" /><path d="M800,60 C850,110 870,160 845,215 C820,255 780,275 748,288" /><path d="M770,110 C750,118 735,128 722,140" /><path d="M325,85 C322,160 310,260 265,365" /><path d="M705,85 C712,160 725,260 770,365" /><path d="M258,365 C400,392 620,392 772,365 L760,425 C620,465 400,470 275,432 Z" /><path d="M310,385 L312,448 M360,385 L362,448 M410,385 L412,448 M455,385 L457,448 M565,385 L563,448 M610,385 L608,448 M660,385 L658,448 M710,385 L708,448 " stroke-width="8"/><path d="M498,180 L498,455 M524,180 L524,455" stroke-width="8"/><path d="M498,190 L524,201 L498,212 M498,212 L524,223 L498,234 M498,234 L524,245 L498,256 M498,256 L524,267 L498,278 M498,278 L524,289 L498,300 M498,300 L524,311 L498,322 M498,322 L524,333 L498,344 M498,344 L524,355 L498,366 M498,366 L524,377 L498,388 M498,388 L524,399 L498,410 M498,410 L524,421 L498,432 M498,432 L524,443 L498,454 " stroke-width="7"/><path d="M488,98 L536,98 L536,178 L488,178 Z M502,125 L524,125 L524,160 L502,160 Z" stroke-width="11"/><path d="M415,95 L398,160 M435,100 L420,160 M385,165 L432,160 L438,210 L392,218 Z" stroke-width="11"/><path d="M605,95 L622,160 M585,100 L600,160 M590,160 L638,165 L630,218 L585,210 Z" stroke-width="11"/><path d="M418,212 L440,232 L355,325 L332,305 Z" stroke-width="11"/><path d="M605,225 L583,245 L672,325 L695,305 Z" stroke-width="11"/><path d="M268,135 C300,130 320,155 290,175 C270,165 262,150 268,135 M268,173 C300,168 320,193 290,213 C270,203 262,188 268,173 M268,211 C300,206 320,231 290,251 C270,241 262,226 268,211 M268,249 C300,244 320,269 290,289 C270,279 262,264 268,249 M268,287 C300,282 320,307 290,327 C270,317 262,302 268,287 " stroke-width="9"/><path d="M742,135 C710,130 690,155 720,175 C740,165 748,150 742,135 M742,173 C710,168 690,193 720,213 C740,203 748,188 742,173 M742,211 C710,206 690,231 720,251 C740,241 748,226 742,211 M742,249 C710,244 690,269 720,289 C740,279 748,264 742,249 M742,287 C710,282 690,307 720,327 C740,317 748,302 742,287 " stroke-width="9"/><path d="M375,-15 C420,20 470,50 510,75 C550,50 600,20 650,-15" stroke-width="11"/><path d="M400,-20 L400,9 M426,-20 L426,24 M452,-20 L452,38 M478,-20 L478,52 M504,-20 L504,67 M530,-20 L530,59 M556,-20 L556,45 M582,-20 L582,30 M608,-20 L608,16 M634,-20 L634,2 " stroke-width="7"/></g>
<g transform="translate(330,335) scale(0.16026)" stroke-width="16"><path d="M300,20 C280,80 250,130 250,160 C255,200 265,225 272,245" /><path d="M730,20 C745,70 765,110 758,140 C745,165 745,185 772,245" /><path d="M470,120 L560,120 M470,120 C465,160 455,200 440,245 M548,125 C560,170 572,205 588,245" /><path d="M335,35 C330,60 335,80 345,95 M690,35 C695,60 690,80 680,95 M610,195 C650,185 690,170 720,150" stroke-width="8"/><path d="M228,185 C195,210 188,262 215,296 C300,348 420,348 485,312 C502,285 497,255 470,235" /><path d="M240,235 C310,278 400,282 470,240" /><path d="M203,252 C290,312 410,318 492,276" stroke-width="11"/><path d="M800,185 C832,210 838,262 812,296 C725,348 605,348 540,312 C523,285 528,255 553,235" /><path d="M785,235 C715,278 625,282 553,240" /><path d="M822,252 C735,312 615,318 533,276" stroke-width="11"/><path d="M238,322 L150,545 M292,350 L205,575 M420,352 C405,420 388,475 374,520" /><path d="M610,360 C625,425 640,478 652,520 M735,345 L828,580 M790,332 L870,545" /><path d="M238,322 L278,388 M292,350 L223,359 M223,359 L263,425 M278,388 L209,396 M209,396 L248,462 M263,425 L194,434 M194,434 L234,500 M248,462 L179,471 M179,471 L220,538 M234,500 L165,508 M165,508 L205,575 M220,538 L150,545 M735,345 L803,368 M790,332 L750,384 M750,384 L817,403 M803,368 L766,423 M766,423 L830,438 M817,403 L782,462 M782,462 L843,474 M830,438 L797,502 M797,502 L857,510 M843,474 L812,541 M812,541 L870,545 M857,510 L828,580 " stroke-width="8"/></g>
<g transform="translate(330,395) scale(0.16026)" stroke-width="16"><path d="M160,165 C110,170 70,200 55,240 C150,275 260,285 345,265 C348,225 356,185 374,146" /><path d="M160,165 L200,202 L215,165" stroke-width="11"/><path d="M860,165 C910,170 950,200 965,240 C870,275 760,285 680,265 C678,225 668,185 652,146" /><path d="M860,165 L825,202 L808,165" stroke-width="11"/><path d="M56,242 L74,293 L88,271 L103,304 L117,281 L131,313 L146,289 L160,320 L174,295 L188,325 L202,298 L217,327 L231,299 L245,327 L260,298 L274,325 L288,295 L302,320 L316,289 L331,313 L345,267 " stroke-width="9"/><path d="M964,242 L946,293 L932,271 L918,304 L904,281 L890,313 L876,289 L862,320 L848,294 L834,325 L820,298 L806,327 L792,299 L778,327 L764,298 L750,325 L736,295 L722,321 L708,290 L694,315 L680,269 " stroke-width="9"/></g>
<g transform="translate(330,195) scale(0.16026)" stroke-width="16"><path d="M243,82 C300,55 390,60 452,98" stroke-width="16"/><path d="M250,128 C310,95 390,92 450,112" stroke-width="15"/><path d="M288,198 C330,218 400,218 442,192" stroke-width="15"/><path d="M418,135 L418,165 M540,135 L540,165" stroke-width="9"/><path d="M455,55 C450,70 455,85 465,92 M502,55 C508,70 503,85 493,92" stroke-width="8"/><path d="M510,98 C570,60 660,55 722,80" stroke-width="16"/><path d="M512,112 C580,90 670,95 732,130" stroke-width="15"/><path d="M540,198 C590,218 660,215 705,188" stroke-width="15"/><path d="M725,140 L745,125 M730,155 L750,142" stroke-width="7"/><path d="M300,215 C330,228 370,232 400,226 M580,226 C620,232 660,226 690,212" stroke-width="6"/><path d="M230,282 C330,228 630,215 770,266" stroke-width="14"/></g>
<text x="0" y="0" transform="translate(459.500,273) rotate(62)" font-family="Liberation Sans, sans-serif" font-size="6" font-weight="bold" fill="#0a0a0a" stroke="none" letter-spacing="-0.2">NEXO</text>
</g>
<text x="423.500" y="110.500" font-family="Liberation Sans, sans-serif" fill="#0a0a0a" font-size="29" font-style="italic" textLength="90" lengthAdjust="spacingAndGlyphs">YANDERE</text>
<text x="522" y="109.500" font-family="Liberation Sans, sans-serif" fill="#0a0a0a" font-size="30" font-style="italic" textLength="85" lengthAdjust="spacingAndGlyphs">DAMON</text>
<path d="M439.500 119.600 C480 118.500 560 117.200 594.800 116" stroke="#0a0a0a" stroke-width="2.200" fill="none" stroke-linecap="round"/>
<text x="470" y="142.500" font-family="Liberation Sans, sans-serif" fill="#0a0a0a" font-size="26" font-style="italic" textLength="88" lengthAdjust="spacingAndGlyphs">STALKER</text>
<text x="244.500" y="151.800" font-family="Liberation Sans, sans-serif" fill="#0a0a0a" font-size="20" font-weight="bold" textLength="67" lengthAdjust="spacingAndGlyphs">REFERENCE</text>
<text x="316" y="484" font-family="Liberation Sans, sans-serif" fill="#0a0a0a" font-size="25" textLength="86" lengthAdjust="spacingAndGlyphs">WITHOUT</text>
<text x="414.500" y="485.500" font-family="Liberation Sans, sans-serif" fill="#0a0a0a" font-size="26" textLength="75" lengthAdjust="spacingAndGlyphs" transform="rotate(2 452 478)">MASKER</text>
<text x="567" y="487.500" font-family="Liberation Sans, sans-serif" fill="#0a0a0a" font-size="25" textLength="53" lengthAdjust="spacingAndGlyphs">WITH</text>
<text x="629.500" y="489.500" font-family="Liberation Sans, sans-serif" fill="#0a0a0a" font-size="27" textLength="72" lengthAdjust="spacingAndGlyphs" transform="rotate(2.500 665 481)">MASKER</text>
</svg>


<!-- status bar widgets -->
<div class="a" style="left:159px;top:511px;width:31px;height:10px;background:#555;border:1px solid #3a3a3a"></div>
<div class="t" style="left:160px;top:512px;font-size:9.500px;color:#e4e4e4;letter-spacing:-0.3px">33.2</div>
<div class="a" style="left:190px;top:511px;width:40px;height:10px;background:#4f4f4f;border:1px solid #3a3a3a"></div>
<svg style="left:191px;top:512px" width="38" height="8" viewBox="0 0 38 8"><path d="M1 7.500h36V1.500C28 2 14 4 1 7.500z" fill="#3c3c3c"/></svg>
<div class="a" style="left:188.500px;top:510.500px;width:2.500px;height:11px;background:#6a6a6a"></div>
<svg style="left:233px;top:511px" width="42" height="10" viewBox="0 0 42 10"><path d="M3.500 5h6M21.500 2v6M18.500 5h6" stroke="#8c8c8c" stroke-width="1.200"/><rect x="33" y="2.500" width="4.500" height="4.500" fill="#c8c8c8"/></svg>
<div class="a" style="left:277px;top:511px;width:34px;height:10px;background:#555;border:1px solid #3a3a3a"></div>
<div class="t" style="left:279.500px;top:512px;font-size:9.500px;color:#e4e4e4;letter-spacing:-0.3px">0.0</div>
<div class="a" style="left:311px;top:511px;width:38px;height:10px;background:#4f4f4f;border:1px solid #3a3a3a"></div>
<svg style="left:312px;top:512px" width="36" height="8" viewBox="0 0 36 8"><path d="M1 7.500h34V1.800C30 .8 12 .8 3 2.500z" fill="#3c3c3c"/></svg>
<div class="a" style="left:310px;top:510.500px;width:2.500px;height:11px;background:#6a6a6a"></div>
<svg style="left:351px;top:511px" width="42" height="10" viewBox="0 0 42 10"><g fill="none" stroke="#a8a8a8" stroke-width="1"><path d="M2.500 7.500a3.300 3.300 0 1 1 6 0"/><path d="M1 5.500l1.500 2.200 2-1.500"/><path d="M16.500 7.500a3.300 3.300 0 1 1 6 0"/><path d="M24 5.500l-1.500 2.200-2-1.500"/><circle cx="34" cy="5" r="3.500"/><path d="M34 2v3"/></g></svg>
<div class="a" style="left:392px;top:511.500px;width:9px;height:9px;background:#5a5a5a"></div>
<svg style="left:394px;top:513px" width="5" height="6" viewBox="0 0 5 6"><path d="M3.800 .5L1.200 3l2.600 2.500" fill="none" stroke="#c4c4c4" stroke-width="1.100"/></svg>
<div class="a" style="left:401px;top:511.500px;width:448px;height:9px;background:#4b4b4b"></div>
<div class="a" style="left:529px;top:512px;width:191px;height:8px;background:#5e5e5e;border-radius:3px"></div>
<div class="a" style="left:849px;top:511.500px;width:9px;height:9px;background:#5a5a5a"></div>
<svg style="left:851px;top:513px" width="5" height="6" viewBox="0 0 5 6"><path d="M1.200 .5L3.800 3 1.200 5.500" fill="none" stroke="#c4c4c4" stroke-width="1.100"/></svg>
<svg style="left:161px;top:523px" width="9" height="8" viewBox="0 0 9 8"><path d="M1.500 4L4.500 1.500 7.500 4M1.500 7L4.500 4.500 7.500 7" fill="none" stroke="#6c6c6c" stroke-width="0.900"/></svg>

<!-- ===== right panel ===== -->
<div class="a" style="left:878px;top:35px;width:122px;height:497px;background:#4d4d4d"></div>
<div class="a" style="left:867px;top:36px;width:133px;height:13px;background:#393939"></div>
<div class="a" style="left:880px;top:37px;width:3px;height:11px;background:#585858"></div>
<svg style="left:868px;top:39px" width="132" height="8" viewBox="0 0 132 8"><g fill="none" stroke="#646464" stroke-width="1.100"><path d="M4 .8L1 4l3 3.200M7.500 .8L4.500 4l3 3.200"/><path d="M107 .8l3 3.200-3 3.200"/><path d="M124.500 .8l3 3.200-3 3.200M128 .8l3 3.200-3 3.200"/></g></svg>
<!-- navigator tabs -->
<div class="a" style="left:878px;top:49px;width:122px;height:17px;background:#3c3c3c"></div>
<svg style="left:881px;top:54px" width="9" height="8" viewBox="0 0 9 8"><path d="M1 1.500h7M1 4h7M1 6.500h7" stroke="#7f7f7f" stroke-width="0.900"/></svg>
<div class="a" style="left:892px;top:53px;width:53px;height:13px;background:#4f4f4f;border-radius:2px 2px 0 0"></div>
<div class="a" style="left:946px;top:53px;width:21px;height:12px;background:#484848;border-radius:2px 2px 0 0"></div>
<div class="a" style="left:968px;top:53px;width:21px;height:12px;background:#484848;border-radius:2px 2px 0 0"></div>
<svg style="left:896px;top:54px" width="12" height="11" viewBox="0 0 12 11"><rect x="2.500" y="1" width="8.500" height="7" rx="1" fill="#cfcfcf"/><path d="M1 3v6.500h8" fill="none" stroke="#cfcfcf" stroke-width="1"/><path d="M4.500 3.500h4.500M4.500 5.500h4.500" stroke="#4f4f4f" stroke-width="0.800"/></svg>
<div class="t nx" style="left:912px;top:56px;font-size:8px;color:#d6d6d6;letter-spacing:-0.1px">Navigator</div>
<svg style="left:950px;top:55px" width="36" height="10" viewBox="0 0 36 10"><g fill="none" stroke="#777" stroke-width="1"><path d="M2 9a5 5 0 0 1 10 0M4.500 9a2.500 2.500 0 0 1 5 0"/><path d="M24 9.500a5 5 0 1 1 10 0"/><path d="M29 5v4M29 3v.8"/></g></svg>
<!-- navigator view -->
<div class="a" style="left:878px;top:66px;width:122px;height:56px;background:#2f2f2f"></div>
<div class="a" style="left:896px;top:66px;width:87px;height:56px;border:1.500px solid #a01e1e;border-bottom:none"></div>
<div class="a" style="left:904px;top:67.500px;width:70px;height:53px;background:#fff"></div>
<svg style="left:904px;top:67.500px" width="70" height="53" viewBox="226 77 563 426">
<rect x="244" y="154" width="65" height="121" fill="#8f8e9c"/><rect x="262" y="165" width="36" height="100" fill="#c3c2cf"/><rect x="244" y="279" width="62" height="65" fill="#62616d"/><rect x="262" y="285" width="40" height="40" fill="#b0afbd"/><rect x="244" y="347" width="62" height="45" fill="#55545f"/><rect x="270" y="352" width="30" height="30" fill="#a9a8b6"/>
<g transform="translate(0,0)" fill="none" stroke="#3a3a3a" stroke-linecap="round" stroke-linejoin="round">
<g transform="translate(330,135) scale(0.16026)" stroke-width="42"><path d="M121,622 C112,500 150,300 195,152 Q200,135 216,128 C280,95 380,65 460,55 C560,65 680,100 734,128 Q750,135 756,152 C800,240 825,360 835,460 C838,500 842,525 846,545 C855,600 880,650 882,690 C878,735 830,790 700,852 C640,880 580,895 520,899" /><path d="M470,120 C430,120 380,140 330,200 C262,298 205,425 160,530 C140,585 115,640 96,683 C86,722 125,782 250,840 C340,880 430,895 480,899" /><path d="M470,120 C530,125 580,150 620,190 C700,280 770,400 820,515 L846,545" /><path d="M300,265 C400,230 580,222 685,268" /><path d="M252,362 C400,322 620,318 772,398" /></g>
<g transform="translate(330,195) scale(0.16026)" stroke-width="42"><path d="M243,40 C228,120 220,200 228,265 C245,340 330,425 440,450 Q490,460 540,450 C650,425 748,340 768,265 C778,200 775,140 762,60" /><path d="M243,37 C215,80 195,125 200,150 C205,180 215,195 232,208" stroke-width="31"/><path d="M193,168 C200,220 200,270 215,300 C228,325 245,338 262,345" stroke-width="31"/><path d="M772,36 C790,90 810,130 826,162 L862,175 L792,189" stroke-width="31"/><path d="M782,206 C785,250 775,290 760,315" stroke-width="31"/></g>
<g transform="translate(330,265) scale(0.16026)" stroke-width="42"><path d="M215,55 C170,100 145,160 165,215 C190,255 230,280 270,292" /><path d="M240,108 C260,118 275,130 285,140" /><path d="M800,60 C850,110 870,160 845,215 C820,255 780,275 748,288" /><path d="M770,110 C750,118 735,128 722,140" /><path d="M325,85 C322,160 310,260 265,365" /><path d="M705,85 C712,160 725,260 770,365" /><path d="M258,365 C400,392 620,392 772,365 L760,425 C620,465 400,470 275,432 Z" /><path d="M310,385 L312,448 M360,385 L362,448 M410,385 L412,448 M455,385 L457,448 M565,385 L563,448 M610,385 L608,448 M660,385 L658,448 M710,385 L708,448 " stroke-width="21"/><path d="M498,180 L498,455 M524,180 L524,455" stroke-width="21"/><path d="M498,190 L524,201 L498,212 M498,212 L524,223 L498,234 M498,234 L524,245 L498,256 M498,256 L524,267 L498,278 M498,278 L524,289 L498,300 M498,300 L524,311 L498,322 M498,322 L524,333 L498,344 M498,344 L524,355 L498,366 M498,366 L524,377 L498,388 M498,388 L524,399 L498,410 M498,410 L524,421 L498,432 M498,432 L524,443 L498,454 " stroke-width="18"/><path d="M488,98 L536,98 L536,178 L488,178 Z M502,125 L524,125 L524,160 L502,160 Z" stroke-width="29"/><path d="M415,95 L398,160 M435,100 L420,160 M385,165 L432,160 L438,210 L392,218 Z" stroke-width="29"/><path d="M605,95 L622,160 M585,100 L600,160 M590,160 L638,165 L630,218 L585,210 Z" stroke-width="29"/><path d="M418,212 L440,232 L355,325 L332,305 Z" stroke-width="29"/><path d="M605,225 L583,245 L672,325 L695,305 Z" stroke-width="29"/><path d="M268,135 C300,130 320,155 290,175 C270,165 262,150 268,135 M268,173 C300,168 320,193 290,213 C270,203 262,188 268,173 M268,211 C300,206 320,231 290,251 C270,241 262,226 268,211 M268,249 C300,244 320,269 290,289 C270,279 262,264 268,249 M268,287 C300,282 320,307 290,327 C270,317 262,302 268,287 " stroke-width="23"/><path d="M742,135 C710,130 690,155 720,175 C740,165 748,150 742,135 M742,173 C710,168 690,193 720,213 C740,203 748,188 742,173 M742,211 C710,206 690,231 720,251 C740,241 748,226 742,211 M742,249 C710,244 690,269 720,289 C740,279 748,264 742,249 M742,287 C710,282 690,307 720,327 C740,317 748,302 742,287 " stroke-width="23"/><path d="M375,-15 C420,20 470,50 510,75 C550,50 600,20 650,-15" stroke-width="29"/><path d="M400,-20 L400,9 M426,-20 L426,24 M452,-20 L452,38 M478,-20 L478,52 M504,-20 L504,67 M530,-20 L530,59 M556,-20 L556,45 M582,-20 L582,30 M608,-20 L608,16 M634,-20 L634,2 " stroke-width="18"/></g>
<g transform="translate(330,335) scale(0.16026)" stroke-width="42"><path d="M300,20 C280,80 250,130 250,160 C255,200 265,225 272,245" /><path d="M730,20 C745,70 765,110 758,140 C745,165 745,185 772,245" /><path d="M470,120 L560,120 M470,120 C465,160 455,200 440,245 M548,125 C560,170 572,205 588,245" /><path d="M335,35 C330,60 335,80 345,95 M690,35 C695,60 690,80 680,95 M610,195 C650,185 690,170 720,150" stroke-width="21"/><path d="M228,185 C195,210 188,262 215,296 C300,348 420,348 485,312 C502,285 497,255 470,235" /><path d="M240,235 C310,278 400,282 470,240" /><path d="M203,252 C290,312 410,318 492,276" stroke-width="29"/><path d="M800,185 C832,210 838,262 812,296 C725,348 605,348 540,312 C523,285 528,255 553,235" /><path d="M785,235 C715,278 625,282 553,240" /><path d="M822,252 C735,312 615,318 533,276" stroke-width="29"/><path d="M238,322 L150,545 M292,350 L205,575 M420,352 C405,420 388,475 374,520" /><path d="M610,360 C625,425 640,478 652,520 M735,345 L828,580 M790,332 L870,545" /><path d="M238,322 L278,388 M292,350 L223,359 M223,359 L263,425 M278,388 L209,396 M209,396 L248,462 M263,425 L194,434 M194,434 L234,500 M248,462 L179,471 M179,471 L220,538 M234,500 L165,508 M165,508 L205,575 M220,538 L150,545 M735,345 L803,368 M790,332 L750,384 M750,384 L817,403 M803,368 L766,423 M766,423 L830,438 M817,403 L782,462 M782,462 L843,474 M830,438 L797,502 M797,502 L857,510 M843,474 L812,541 M812,541 L870,545 M857,510 L828,580 " stroke-width="21"/></g>
<g transform="translate(330,395) scale(0.16026)" stroke-width="42"><path d="M160,165 C110,170 70,200 55,240 C150,275 260,285 345,265 C348,225 356,185 374,146" /><path d="M160,165 L200,202 L215,165" stroke-width="29"/><path d="M860,165 C910,170 950,200 965,240 C870,275 760,285 680,265 C678,225 668,185 652,146" /><path d="M860,165 L825,202 L808,165" stroke-width="29"/><path d="M56,242 L74,293 L88,271 L103,304 L117,281 L131,313 L146,289 L160,320 L174,295 L188,325 L202,298 L217,327 L231,299 L245,327 L260,298 L274,325 L288,295 L302,320 L316,289 L331,313 L345,267 " stroke-width="23"/><path d="M964,242 L946,293 L932,271 L918,304 L904,281 L890,313 L876,289 L862,320 L848,294 L834,325 L820,298 L806,327 L792,299 L778,327 L764,298 L750,325 L736,295 L722,321 L708,290 L694,315 L680,269 " stroke-width="23"/></g>
<g transform="translate(330,195) scale(0.16026)" stroke-width="42"><path d="M243,82 C300,55 390,60 452,98" stroke-width="42"/><path d="M250,128 C310,95 390,92 450,112" stroke-width="39"/><path d="M288,198 C330,218 400,218 442,192" stroke-width="39"/><path d="M418,135 L418,165 M540,135 L540,165" stroke-width="23"/><path d="M455,55 C450,70 455,85 465,92 M502,55 C508,70 503,85 493,92" stroke-width="21"/><path d="M510,98 C570,60 660,55 722,80" stroke-width="42"/><path d="M512,112 C580,90 670,95 732,130" stroke-width="39"/><path d="M540,198 C590,218 660,215 705,188" stroke-width="39"/><path d="M725,140 L745,125 M730,155 L750,142" stroke-width="18"/><path d="M335,265 C400,300 560,305 662,255" stroke-width="39"/><path d="M335,265 C370,330 430,360 480,358 C560,350 620,310 662,255" stroke-width="39"/><path d="M380,305 C440,345 540,340 605,298" stroke-width="23"/><path d="M395,290 L410,325 L430,298" stroke-width="23"/><path d="M440,378 C480,385 520,383 560,372" stroke-width="21"/><path d="M402,420 L409,395 L416,420 L423,395 L430,420 L437,395 L444,420 L451,395 L458,420 L465,395 L472,420 L479,395 L486,420 L493,395 L500,420 L507,395 L514,420 L521,395 L528,420 L535,395 L542,420 L549,395 L556,420 L563,395 L570,420 L577,395 L584,420 L591,395 L598,420 L605,395 L612,420 " stroke-width="13"/></g>
</g>
<g transform="translate(217,0)" fill="none" stroke="#3a3a3a" stroke-linecap="round" stroke-linejoin="round">
<g transform="translate(330,135) scale(0.16026)" stroke-width="42"><path d="M121,622 C112,500 150,300 195,152 Q200,135 216,128 C280,95 380,65 460,55 C560,65 680,100 734,128 Q750,135 756,152 C800,240 825,360 835,460 C838,500 842,525 846,545 C855,600 880,650 882,690 C878,735 830,790 700,852 C640,880 580,895 520,899" /><path d="M470,120 C430,120 380,140 330,200 C262,298 205,425 160,530 C140,585 115,640 96,683 C86,722 125,782 250,840 C340,880 430,895 480,899" /><path d="M470,120 C530,125 580,150 620,190 C700,280 770,400 820,515 L846,545" /><path d="M300,265 C400,230 580,222 685,268" /><path d="M252,362 C400,322 620,318 772,398" /></g>
<g transform="translate(330,195) scale(0.16026)" stroke-width="42"><path d="M243,40 C228,120 220,200 228,265 C245,340 330,425 440,450 Q490,460 540,450 C650,425 748,340 768,265 C778,200 775,140 762,60" /><path d="M243,37 C215,80 195,125 200,150 C205,180 215,195 232,208" stroke-width="31"/><path d="M193,168 C200,220 200,270 215,300 C228,325 245,338 262,345" stroke-width="31"/><path d="M772,36 C790,90 810,130 826,162 L862,175 L792,189" stroke-width="31"/><path d="M782,206 C785,250 775,290 760,315" stroke-width="31"/></g>
<g transform="translate(330,265) scale(0.16026)" stroke-width="42"><path d="M215,55 C170,100 145,160 165,215 C190,255 230,280 270,292" /><path d="M240,108 C260,118 275,130 285,140" /><path d="M800,60 C850,110 870,160 845,215 C820,255 780,275 748,288" /><path d="M770,110 C750,118 735,128 722,140" /><path d="M325,85 C322,160 310,260 265,365" /><path d="M705,85 C712,160 725,260 770,365" /><path d="M258,365 C400,392 620,392 772,365 L760,425 C620,465 400,470 275,432 Z" /><path d="M310,385 L312,448 M360,385 L362,448 M410,385 L412,448 M455,385 L457,448 M565,385 L563,448 M610,385 L608,448 M660,385 L658,448 M710,385 L708,448 " stroke-width="21"/><path d="M498,180 L498,455 M524,180 L524,455" stroke-width="21"/><path d="M498,190 L524,201 L498,212 M498,212 L524,223 L498,234 M498,234 L524,245 L498,256 M498,256 L524,267 L498,278 M498,278 L524,289 L498,300 M498,300 L524,311 L498,322 M498,322 L524,333 L498,344 M498,344 L524,355 L498,366 M498,366 L524,377 L498,388 M498,388 L524,399 L498,410 M498,410 L524,421 L498,432 M498,432 L524,443 L498,454 " stroke-width="18"/><path d="M488,98 L536,98 L536,178 L488,178 Z M502,125 L524,125 L524,160 L502,160 Z" stroke-width="29"/><path d="M415,95 L398,160 M435,100 L420,160 M385,165 L432,160 L438,210 L392,218 Z" stroke-width="29"/><path d="M605,95 L622,160 M585,100 L600,160 M590,160 L638,165 L630,218 L585,210 Z" stroke-width="29"/><path d="M418,212 L440,232 L355,325 L332,305 Z" stroke-width="29"/><path d="M605,225 L583,245 L672,325 L695,305 Z" stroke-width="29"/><path d="M268,135 C300,130 320,155 290,175 C270,165 262,150 268,135 M268,173 C300,168 320,193 290,213 C270,203 262,188 268,173 M268,211 C300,206 320,231 290,251 C270,241 262,226 268,211 M268,249 C300,244 320,269 290,289 C270,279 262,264 268,249 M268,287 C300,282 320,307 290,327 C270,317 262,302 268,287 " stroke-width="23"/><path d="M742,135 C710,130 690,155 720,175 C740,165 748,150 742,135 M742,173 C710,168 690,193 720,213 C740,203 748,188 742,173 M742,211 C710,206 690,231 720,251 C740,241 748,226 742,211 M742,249 C710,244 690,269 720,289 C740,279 748,264 742,249 M742,287 C710,282 690,307 720,327 C740,317 748,302 742,287 " stroke-width="23"/><path d="M375,-15 C420,20 470,50 510,75 C550,50 600,20 650,-15" stroke-width="29"/><path d="M400,-20 L400,9 M426,-20 L426,24 M452,-20 L452,38 M478,-20 L478,52 M504,-20 L504,67 M530,-20 L530,59 M556,-20 L556,45 M582,-20 L582,30 M608,-20 L608,16 M634,-20 L634,2 " stroke-width="18"/></g>
<g transform="translate(330,335) scale(0.16026)" stroke-width="42"><path d="M300,20 C280,80 250,130 250,160 C255,200 265,225 272,245" /><path d="M730,20 C745,70 765,110 758,140 C745,165 745,185 772,245" /><path d="M470,120 L560,120 M470,120 C465,160 455,200 440,245 M548,125 C560,170 572,205 588,245" /><path d="M335,35 C330,60 335,80 345,95 M690,35 C695,60 690,80 680,95 M610,195 C650,185 690,170 720,150" stroke-width="21"/><path d="M228,185 C195,210 188,262 215,296 C300,348 420,348 485,312 C502,285 497,255 470,235" /><path d="M240,235 C310,278 400,282 470,240" /><path d="M203,252 C290,312 410,318 492,276" stroke-width="29"/><path d="M800,185 C832,210 838,262 812,296 C725,348 605,348 540,312 C523,285 528,255 553,235" /><path d="M785,235 C715,278 625,282 553,240" /><path d="M822,252 C735,312 615,318 533,276" stroke-width="29"/><path d="M238,322 L150,545 M292,350 L205,575 M420,352 C405,420 388,475 374,520" /><path d="M610,360 C625,425 640,478 652,520 M735,345 L828,580 M790,332 L870,545" /><path d="M238,322 L278,388 M292,350 L223,359 M223,359 L263,425 M278,388 L209,396 M209,396 L248,462 M263,425 L194,434 M194,434 L234,500 M248,462 L179,471 M179,471 L220,538 M234,500 L165,508 M165,508 L205,575 M220,538 L150,545 M735,345 L803,368 M790,332 L750,384 M750,384 L817,403 M803,368 L766,423 M766,423 L830,438 M817,403 L782,462 M782,462 L843,474 M830,438 L797,502 M797,502 L857,510 M843,474 L812,541 M812,541 L870,545 M857,510 L828,580 " stroke-width="21"/></g>
<g transform="translate(330,395) scale(0.16026)" stroke-width="42"><path d="M160,165 C110,170 70,200 55,240 C150,275 260,285 345,265 C348,225 356,185 374,146" /><path d="M160,165 L200,202 L215,165" stroke-width="29"/><path d="M860,165 C910,170 950,200 965,240 C870,275 760,285 680,265 C678,225 668,185 652,146" /><path d="M860,165 L825,202 L808,165" stroke-width="29"/><path d="M56,242 L74,293 L88,271 L103,304 L117,281 L131,313 L146,289 L160,320 L174,295 L188,325 L202,298 L217,327 L231,299 L245,327 L260,298 L274,325 L288,295 L302,320 L316,289 L331,313 L345,267 " stroke-width="23"/><path d="M964,242 L946,293 L932,271 L918,304 L904,281 L890,313 L876,289 L862,320 L848,294 L834,325 L820,298 L806,327 L792,299 L778,327 L764,298 L750,325 L736,295 L722,321 L708,290 L694,315 L680,269 " stroke-width="23"/></g>
<g transform="translate(330,195) scale(0.16026)" stroke-width="42"><path d="M243,82 C300,55 390,60 452,98" stroke-width="42"/><path d="M250,128 C310,95 390,92 450,112" stroke-width="39"/><path d="M288,198 C330,218 400,218 442,192" stroke-width="39"/><path d="M418,135 L418,165 M540,135 L540,165" stroke-width="23"/><path d="M455,55 C450,70 455,85 465,92 M502,55 C508,70 503,85 493,92" stroke-width="21"/><path d="M510,98 C570,60 660,55 722,80" stroke-width="42"/><path d="M512,112 C580,90 670,95 732,130" stroke-width="39"/><path d="M540,198 C590,218 660,215 705,188" stroke-width="39"/><path d="M725,140 L745,125 M730,155 L750,142" stroke-width="18"/><path d="M300,215 C330,228 370,232 400,226 M580,226 C620,232 660,226 690,212" stroke-width="16"/><path d="M230,282 C330,228 630,215 770,266" stroke-width="36"/></g>
</g>
<text x="423" y="111" font-family="Liberation Sans, sans-serif" fill="#3a3a3a" font-size="29" font-style="italic" font-weight="bold" textLength="185" lengthAdjust="spacingAndGlyphs">YANDERE DAMON</text><text x="470" y="142" font-family="Liberation Sans, sans-serif" fill="#3a3a3a" font-size="26" font-style="italic" font-weight="bold" textLength="88" lengthAdjust="spacingAndGlyphs">STALKER</text><text x="244" y="151" font-family="Liberation Sans, sans-serif" fill="#3a3a3a" font-size="19" font-weight="bold" textLength="67" lengthAdjust="spacingAndGlyphs">REFERENCE</text><text x="315" y="484" font-family="Liberation Sans, sans-serif" fill="#3a3a3a" font-size="26" font-weight="bold" textLength="175" lengthAdjust="spacingAndGlyphs">WITHOUT MASKER</text><text x="567" y="487" font-family="Liberation Sans, sans-serif" fill="#3a3a3a" font-size="26" font-weight="bold" textLength="136" lengthAdjust="spacingAndGlyphs">WITH MASKER</text><path d="M439 119.500L595 116" stroke="#3a3a3a" stroke-width="4"/></svg>

<!-- navigator controls -->
<div class="a" style="left:878px;top:122px;width:122px;height:31px;background:#4f4f4f"></div>
<div class="a" style="left:881px;top:125px;width:16px;height:11px;background:#555;border:1px solid #3a3a3a"></div>
<div class="t" style="left:882px;top:126px;font-size:9.500px;color:#e8e8e8;letter-spacing:-0.4px">33.2</div>
<div class="a" style="left:900px;top:126px;width:19px;height:9px;background:#3a3a3a"></div>
<div class="a" style="left:897.500px;top:123px;width:2px;height:14px;background:#707070"></div>
<div class="a" style="left:881px;top:140px;width:16px;height:11px;background:#555;border:1px solid #3a3a3a"></div>
<div class="t" style="left:884.500px;top:141px;font-size:9.500px;color:#e8e8e8;letter-spacing:-0.4px">0.0</div>
<svg style="left:901px;top:140px" width="19" height="10" viewBox="0 0 19 10"><path d="M.5 9.500h18V2C14 .8 5 .8 1.500 2.500z" fill="#3a3a3a"/></svg>
<div class="a" style="left:898.500px;top:138px;width:2px;height:14px;background:#707070"></div>
<svg style="left:924px;top:124px" width="76" height="29" viewBox="0 0 76 29"><g fill="none" stroke="#cfcfcf" stroke-width="1"><circle cx="6.500" cy="7" r="5"/><path d="M3.800 7h5.400"/><circle cx="21.500" cy="7" r="5"/><path d="M18.800 7h5.400M21.500 4.300v5.400"/><circle cx="36" cy="7" r="5"/><rect x="49" y="2" width="5.500" height="5.500"/><rect x="52" y="5.500" width="5.500" height="5.500"/><rect x="64.500" y="2.500" width="8.500" height="8.500"/><path d="M66 9.500l5.500-5.500M66 6.500v3h3M68.500 4h3v3"/><path d="M2.500 19a4.300 4.300 0 1 1 1.500 5.500"/><path d="M1 17l1.300 2.500 2.500-1"/><path d="M26 19a4.300 4.300 0 1 0-1.500 5.500"/><path d="M27.500 17l-1.300 2.500-2.500-1" fill="#cfcfcf"/><circle cx="36.500" cy="21.500" r="5"/><path d="M36.500 17.500v3.500"/><path d="M54.500 16v11"/><path d="M48.500 18.500v6l4-3zM60.500 18.500v6l-4-3z"/><path d="M64 22h10"/><path d="M66 16.500h6l-3 4zM66 27.500h6l-3-4z" fill="#cfcfcf"/></g><rect x="33.800" y="4.800" width="4.400" height="4.400" rx="0.800" fill="#cfcfcf"/><circle cx="36.500" cy="22" r="1.300" fill="#cfcfcf"/><path d="M60.500 18.500v6l-4-3z" fill="#cfcfcf"/></svg>
<div class="a" style="left:878px;top:153px;width:122px;height:3px;background:#3c3c3c"></div>
<!-- layer tabs -->
<div class="a" style="left:878px;top:156px;width:122px;height:12px;background:#3c3c3c"></div>
<svg style="left:881px;top:158px" width="9" height="8" viewBox="0 0 9 8"><path d="M1 1.500h7M1 4h7M1 6.500h7" stroke="#7f7f7f" stroke-width="0.900"/></svg>
<div class="a" style="left:892px;top:156px;width:39px;height:12px;background:#4f4f4f;border-radius:2px 2px 0 0"></div>
<div class="a" style="left:932px;top:156px;width:21px;height:11px;background:#484848;border-radius:2px 2px 0 0"></div>
<svg style="left:896px;top:156px" width="12" height="12" viewBox="0 0 12 12"><g fill="none" stroke="#d6d6d6" stroke-width="1" stroke-linejoin="round"><path d="M6 1l5 2.500L6 6 1 3.500z"/><path d="M1 6l5 2.500L11 6M1 8.500L6 11l5-2.500"/></g></svg>
<div class="t nx" style="left:912px;top:158.500px;font-size:8px;color:#d6d6d6;letter-spacing:-0.1px">Layer</div>
<svg style="left:937px;top:158px" width="12" height="9" viewBox="0 0 12 9"><path d="M2 9V5.500a4 4 0 0 1 8 0V9M4.500 9V6.500a1.500 1.500 0 0 1 3 0V9" fill="none" stroke="#6c6c6c" stroke-width="1"/></svg>
<!-- layer header -->
<div class="a" style="left:878px;top:168px;width:122px;height:50px;background:#4e4e4e"></div>
<div class="a" style="left:879px;top:170px;width:28px;height:14px;background:#5c5c5c;border-radius:2px"></div>
<div class="a" style="left:909px;top:170px;width:29px;height:14px;background:#5c5c5c;border-radius:2px"></div>
<svg style="left:881px;top:172px" width="25" height="10" viewBox="0 0 25 10"><rect x="1" y=".5" width="11" height="9" rx="1" fill="none" stroke="#c9c9c9" stroke-width="1"/><rect x="3" y="2.500" width="7" height="5" fill="none" stroke="#8a8a8a" stroke-width="0.600"/><path d="M17.500 3.500l2.500 2.500 2.500-2.500" fill="none" stroke="#c9c9c9" stroke-width="1.100"/></svg>
<div class="t" style="left:911.500px;top:173px;font-size:8.500px;color:#d8d8d8;letter-spacing:-0.3px">Nor<span style="color:#8c8c8c">m</span></div>
<svg style="left:929px;top:175px" width="7" height="5" viewBox="0 0 7 5"><path d="M.8 .8l2.700 2.700L6.200 .8" fill="none" stroke="#c9c9c9" stroke-width="1.100"/></svg>
<svg style="left:943px;top:173px" width="27" height="7" viewBox="0 0 27 7"><rect width="27" height="7" fill="#f4f4f4"/><g fill="#bdbdbd"><rect x="0" y="0" width="3.400" height="3.500"/><rect x="6.800" y="0" width="3.400" height="3.500"/><rect x="13.600" y="0" width="3.400" height="3.500"/><rect x="20.400" y="0" width="3.400" height="3.500"/><rect x="3.400" y="3.500" width="3.400" height="3.500"/><rect x="10.200" y="3.500" width="3.400" height="3.500"/><rect x="17" y="3.500" width="3.400" height="3.500"/><rect x="23.800" y="3.500" width="3.200" height="3.500"/></g></svg>
<div class="a" style="left:970.500px;top:170px;width:2px;height:14px;background:#6e6e6e"></div>
<div class="t" style="left:976px;top:172.500px;font-size:9.500px;color:#e8e8e8;letter-spacing:-0.4px">100</div>
<svg style="left:991px;top:171px" width="8" height="12" viewBox="0 0 8 12"><path d="M1 4.500l3-3 3 3M1 7.500l3 3 3-3" fill="none" stroke="#c9c9c9" stroke-width="1"/></svg>
<!-- icon row 1 -->
<svg style="left:942px;top:186px" width="58" height="14" viewBox="0 0 58 14"><g fill="none" stroke="#c9c9c9" stroke-width="1"><rect x="1.500" y="3.500" width="7" height="8"/><rect x="4" y="1.500" width="6" height="7" fill="#c9c9c9"/><path d="M16 4.500h9M17 2.500l2 2M24 2.500l-2 2M17 7l2-1.500M24 7l-2-1.500"/><path d="M19.500 12.500l.7-7h.6l.7 7z" fill="#c9c9c9"/><rect x="33" y="6" width="7" height="6" fill="#c9c9c9"/><path d="M34.500 6V4.300a2 2 0 0 1 4 0V6"/></g><g fill="#c9c9c9"><rect x="46.500" y="2" width="3" height="3"/><rect x="52.500" y="2" width="3" height="3"/><rect x="49.500" y="5" width="3" height="3"/><rect x="52.500" y="8" width="3" height="3"/><rect x="46" y="8" width="4.500" height="4"/></g><path d="M47 8V7a1.300 1.300 0 0 1 2.600 0v1" fill="none" stroke="#c9c9c9" stroke-width="0.800"/></svg>
<!-- icon row 2 -->
<svg style="left:897px;top:203px" width="103" height="14" viewBox="0 0 103 14"><g fill="none" stroke="#c9c9c9" stroke-width="1"><path d="M9.500 11.500H3a1 1 0 0 1-1-1v-7a1 1 0 0 1 1-1h7a1 1 0 0 1 1 1v4.500"/><circle cx="11" cy="11" r="2.300"/><path d="M16 12V3h3.500l1 1.200H25V8" /><circle cx="25.500" cy="11" r="2.300"/></g><path d="M16 12V5.500h8.500V9a3 3 0 0 0-2 3z" fill="#c9c9c9"/><g fill="none" stroke="#777" stroke-width="1"><path d="M31.500 6.500v5.500h5.500M36.500 2.500h4.500v4.500h-4.500z"/><path d="M45.500 7.500v4.500h4.500v-4.500zM50.500 2.500H55V7h-4.500z"/><rect x="73.500" y="4.500" width="9" height="7.500"/><path d="M73.500 4.500v-2h3.500v2"/><rect x="75.500" y="6.500" width="5" height="3.500" fill="#777"/></g><rect x="59" y="2" width="10.500" height="10.500" rx="1.500" fill="#d4d4d4"/><circle cx="64.200" cy="7.200" r="2.600" fill="#4e4e4e"/><g fill="none" stroke="#b8b8b8" stroke-width="1"><path d="M88 4h8M89.200 4l.6 8.500h4.400l.6-8.500M90.200 3.800c0-2 3.600-2 3.600 0M91 6v4.500M93 6v4.500"/></g></svg>
<!-- layer list -->
<div class="a" style="left:878px;top:218px;width:122px;height:314px;background:#3d3d3d"></div>
<div class="a" style="left:990px;top:218px;width:10px;height:314px;background:#3f3f3f"></div>
<div class="a" style="left:892.500px;top:218px;width:1px;height:209px;background:#2e2e2e"></div>
<div class="a" style="left:905.500px;top:218px;width:1px;height:209px;background:#2e2e2e"></div>
<div class="a" style="left:878px;top:241.5px;width:112px;height:1px;background:#303030"></div>
<svg style="left:880px;top:226.0px" width="11" height="8" viewBox="0 0 11 8"><path d="M.7 4.500C2 2 3.800 1 5.500 1s3.500 1 4.800 3.500" fill="none" stroke="#d8d8d8" stroke-width="1.200"/><circle cx="5.500" cy="4.800" r="2" fill="#d8d8d8"/></svg>
<div class="a" style="left:895.5px;top:226.0px;width:8px;height:8px;border:1px solid #494949;border-radius:1px"></div>
<svg style="left:907px;top:229.0px" width="8" height="6" viewBox="0 0 8 6"><path d="M1 1l3 3 3-3" fill="none" stroke="#c9c9c9" stroke-width="1.100"/></svg>
<svg style="left:917px;top:225.0px" width="14" height="10" viewBox="0 0 14 10"><path d="M1 9V1.500h3.500l1 1.200H10.500V4" fill="none" stroke="#c4c4c4" stroke-width="1"/><path d="M1 9l2-5h10.500l-2.200 5z" fill="#c4c4c4"/></svg>
<div class="t lt" style="left:939px;top:222.0px">100 % Normal</div>
<div class="t lt" style="left:939px;top:231.5px">Tittle</div>
<div class="a" style="left:878px;top:265.5px;width:112px;height:1px;background:#303030"></div>
<svg style="left:880px;top:250.0px" width="11" height="8" viewBox="0 0 11 8"><path d="M.7 4.500C2 2 3.800 1 5.500 1s3.500 1 4.800 3.500" fill="none" stroke="#d8d8d8" stroke-width="1.200"/><circle cx="5.500" cy="4.800" r="2" fill="#d8d8d8"/></svg>
<div class="a" style="left:895.5px;top:250.0px;width:8px;height:8px;border:1px solid #494949;border-radius:1px"></div>
<svg style="left:922px;top:244.5px" width="27" height="19" viewBox="0 0 27 19"><rect width="27" height="19" fill="#fff"/><g fill="#c8c8c8"><rect x="0.0" y="0.0" width="3.4" height="3.4"/><rect x="6.8" y="0.0" width="3.4" height="3.4"/><rect x="13.6" y="0.0" width="3.4" height="3.4"/><rect x="20.4" y="0.0" width="3.4" height="3.4"/><rect x="3.4" y="3.4" width="3.4" height="3.4"/><rect x="10.2" y="3.4" width="3.4" height="3.4"/><rect x="17.0" y="3.4" width="3.4" height="3.4"/><rect x="23.8" y="3.4" width="3.2" height="3.4"/><rect x="0.0" y="6.8" width="3.4" height="3.4"/><rect x="6.8" y="6.8" width="3.4" height="3.4"/><rect x="13.6" y="6.8" width="3.4" height="3.4"/><rect x="20.4" y="6.8" width="3.4" height="3.4"/><rect x="3.4" y="10.2" width="3.4" height="3.4"/><rect x="10.2" y="10.2" width="3.4" height="3.4"/><rect x="17.0" y="10.2" width="3.4" height="3.4"/><rect x="23.8" y="10.2" width="3.2" height="3.4"/><rect x="0.0" y="13.6" width="3.4" height="3.4"/><rect x="6.8" y="13.6" width="3.4" height="3.4"/><rect x="13.6" y="13.6" width="3.4" height="3.4"/><rect x="20.4" y="13.6" width="3.4" height="3.4"/><rect x="3.4" y="17.0" width="3.4" height="2.0"/><rect x="10.2" y="17.0" width="3.4" height="2.0"/><rect x="17.0" y="17.0" width="3.4" height="2.0"/><rect x="23.8" y="17.0" width="3.2" height="2.0"/></g><rect x=".5" y=".5" width="26" height="18" fill="none" stroke="#d8d8d8" stroke-width="1"/></svg>
<div class="t lt" style="left:953px;top:245.5px;color:#e0e0e0">100 % No<span style="opacity:.55">r</span></div>
<div class="t lt" style="left:953px;top:256.0px;font-size:7.600px;color:#e0e0e0">Layer 4 Copy</div>
<div class="a" style="left:906px;top:266px;width:84px;height:24px;background:#5f6a86"></div>
<div class="a" style="left:878px;top:289.5px;width:112px;height:1px;background:#303030"></div>
<svg style="left:880px;top:274.0px" width="11" height="8" viewBox="0 0 11 8"><path d="M.7 4.500C2 2 3.800 1 5.500 1s3.500 1 4.800 3.500" fill="none" stroke="#d8d8d8" stroke-width="1.200"/><circle cx="5.500" cy="4.800" r="2" fill="#d8d8d8"/></svg>
<svg style="left:894px;top:272.0px" width="11" height="11" viewBox="0 0 11 11"><path d="M2 8L8.500 1.500" stroke="#dcdcdc" stroke-width="1.600" stroke-linecap="round"/><path d="M1 10h9" stroke="#dcdcdc" stroke-width="1"/></svg>
<svg style="left:922px;top:268.5px" width="27" height="19" viewBox="0 0 27 19"><rect width="27" height="19" fill="#fff"/><g fill="#c8c8c8"><rect x="0.0" y="0.0" width="3.4" height="3.4"/><rect x="6.8" y="0.0" width="3.4" height="3.4"/><rect x="13.6" y="0.0" width="3.4" height="3.4"/><rect x="20.4" y="0.0" width="3.4" height="3.4"/><rect x="3.4" y="3.4" width="3.4" height="3.4"/><rect x="10.2" y="3.4" width="3.4" height="3.4"/><rect x="17.0" y="3.4" width="3.4" height="3.4"/><rect x="23.8" y="3.4" width="3.2" height="3.4"/><rect x="0.0" y="6.8" width="3.4" height="3.4"/><rect x="6.8" y="6.8" width="3.4" height="3.4"/><rect x="13.6" y="6.8" width="3.4" height="3.4"/><rect x="20.4" y="6.8" width="3.4" height="3.4"/><rect x="3.4" y="10.2" width="3.4" height="3.4"/><rect x="10.2" y="10.2" width="3.4" height="3.4"/><rect x="17.0" y="10.2" width="3.4" height="3.4"/><rect x="23.8" y="10.2" width="3.2" height="3.4"/><rect x="0.0" y="13.6" width="3.4" height="3.4"/><rect x="6.8" y="13.6" width="3.4" height="3.4"/><rect x="13.6" y="13.6" width="3.4" height="3.4"/><rect x="20.4" y="13.6" width="3.4" height="3.4"/><rect x="3.4" y="17.0" width="3.4" height="2.0"/><rect x="10.2" y="17.0" width="3.4" height="2.0"/><rect x="17.0" y="17.0" width="3.4" height="2.0"/><rect x="23.8" y="17.0" width="3.2" height="2.0"/></g><rect x=".5" y=".5" width="26" height="18" fill="none" stroke="#f0f0f0" stroke-width="1"/></svg>
<div class="t lt" style="left:953px;top:269.5px;color:#c5cdea">100 % No<span style="opacity:.55">r</span></div>
<div class="t lt" style="left:953px;top:280.0px;color:#e8ecfa">Layer 4</div>
<div class="a" style="left:878px;top:311.5px;width:112px;height:1px;background:#303030"></div>
<svg style="left:880px;top:297.0px" width="11" height="8" viewBox="0 0 11 8"><path d="M.7 4.500C2 2 3.800 1 5.500 1s3.500 1 4.800 3.500" fill="none" stroke="#d8d8d8" stroke-width="1.200"/><circle cx="5.500" cy="4.800" r="2" fill="#d8d8d8"/></svg>
<div class="a" style="left:895.5px;top:297.0px;width:8px;height:8px;border:1px solid #494949;border-radius:1px"></div>
<svg style="left:910px;top:297.0px" width="6" height="8" viewBox="0 0 6 8"><path d="M1 1l3 3-3 3" fill="none" stroke="#c9c9c9" stroke-width="1.100"/></svg>
<svg style="left:919px;top:296.0px" width="11" height="10" viewBox="0 0 11 10"><path d="M.5 9.500V.8h4l1 1.200h5v7.500z" fill="#b9b9b9"/><path d="M.5 3.200h10" stroke="#8a8a8a" stroke-width="0.600"/></svg>
<div class="t lt" style="left:939px;top:293.0px">100 % Normal</div>
<div class="t lt" style="left:939px;top:302.5px">References</div>
<div class="a" style="left:878px;top:334.5px;width:112px;height:1px;background:#303030"></div>
<svg style="left:880px;top:319.5px" width="11" height="8" viewBox="0 0 11 8"><path d="M.7 4.500C2 2 3.800 1 5.500 1s3.500 1 4.800 3.500" fill="none" stroke="#d8d8d8" stroke-width="1.200"/><circle cx="5.500" cy="4.800" r="2" fill="#d8d8d8"/></svg>
<div class="a" style="left:895.5px;top:319.5px;width:8px;height:8px;border:1px solid #494949;border-radius:1px"></div>
<svg style="left:910px;top:319.5px" width="6" height="8" viewBox="0 0 6 8"><path d="M1 1l3 3-3 3" fill="none" stroke="#c9c9c9" stroke-width="1.100"/></svg>
<svg style="left:919px;top:318.5px" width="11" height="10" viewBox="0 0 11 10"><path d="M.5 9.500V.8h4l1 1.200h5v7.500z" fill="#b9b9b9"/><path d="M.5 3.200h10" stroke="#8a8a8a" stroke-width="0.600"/></svg>
<div class="t lt" style="left:939px;top:315.5px">100 % Normal</div>
<div class="t lt" style="left:939px;top:325.0px">Character2</div>
<div class="a" style="left:878px;top:356.5px;width:112px;height:1px;background:#303030"></div>
<svg style="left:880px;top:342.0px" width="11" height="8" viewBox="0 0 11 8"><path d="M.7 4.500C2 2 3.800 1 5.500 1s3.500 1 4.800 3.500" fill="none" stroke="#d8d8d8" stroke-width="1.200"/><circle cx="5.500" cy="4.800" r="2" fill="#d8d8d8"/></svg>
<div class="a" style="left:895.5px;top:342.0px;width:8px;height:8px;border:1px solid #494949;border-radius:1px"></div>
<svg style="left:910px;top:342.0px" width="6" height="8" viewBox="0 0 6 8"><path d="M1 1l3 3-3 3" fill="none" stroke="#c9c9c9" stroke-width="1.100"/></svg>
<svg style="left:919px;top:341.0px" width="11" height="10" viewBox="0 0 11 10"><path d="M.5 9.500V.8h4l1 1.200h5v7.500z" fill="#b9b9b9"/><path d="M.5 3.200h10" stroke="#8a8a8a" stroke-width="0.600"/></svg>
<div class="t lt" style="left:939px;top:338.0px">100 % Normal</div>
<div class="t lt" style="left:939px;top:347.5px">Characters</div>
<div class="a" style="left:878px;top:379.5px;width:112px;height:1px;background:#303030"></div>
<svg style="left:880px;top:364.5px" width="11" height="8" viewBox="0 0 11 8"><path d="M.7 4.500C2 2 3.800 1 5.500 1s3.500 1 4.800 3.500" fill="none" stroke="#d8d8d8" stroke-width="1.200"/><circle cx="5.500" cy="4.800" r="2" fill="#d8d8d8"/></svg>
<div class="a" style="left:895.5px;top:364.5px;width:8px;height:8px;border:1px solid #494949;border-radius:1px"></div>
<svg style="left:910px;top:364.5px" width="6" height="8" viewBox="0 0 6 8"><path d="M1 1l3 3-3 3" fill="none" stroke="#c9c9c9" stroke-width="1.100"/></svg>
<svg style="left:919px;top:363.5px" width="11" height="10" viewBox="0 0 11 10"><path d="M.5 9.500V.8h4l1 1.200h5v7.500z" fill="#b9b9b9"/><path d="M.5 3.200h10" stroke="#8a8a8a" stroke-width="0.600"/></svg>
<div class="t lt" style="left:939px;top:360.5px">100 % Normal</div>
<div class="t lt" style="left:939px;top:370.0px">Sketches</div>
<div class="a" style="left:878px;top:402.5px;width:112px;height:1px;background:#303030"></div>
<div class="a" style="left:881.5px;top:387.5px;width:8px;height:8px;border:1px solid #494949;border-radius:1px"></div>
<div class="a" style="left:895.5px;top:387.5px;width:8px;height:8px;border:1px solid #494949;border-radius:1px"></div>
<svg style="left:910px;top:387.5px" width="6" height="8" viewBox="0 0 6 8"><path d="M1 1l3 3-3 3" fill="none" stroke="#c9c9c9" stroke-width="1.100"/></svg>
<svg style="left:919px;top:386.5px" width="11" height="10" viewBox="0 0 11 10"><path d="M.5 9.500V.8h4l1 1.200h5v7.500z" fill="#b9b9b9"/><path d="M.5 3.200h10" stroke="#8a8a8a" stroke-width="0.600"/></svg>
<div class="t lt" style="left:939px;top:383.5px">100 % Normal</div>
<div class="t lt" style="left:939px;top:393.0px">Duplicated</div>
<div class="a" style="left:878px;top:426.5px;width:112px;height:1px;background:#303030"></div>
<svg style="left:880px;top:411.0px" width="11" height="8" viewBox="0 0 11 8"><path d="M.7 4.500C2 2 3.800 1 5.500 1s3.500 1 4.800 3.500" fill="none" stroke="#d8d8d8" stroke-width="1.200"/><circle cx="5.500" cy="4.800" r="2" fill="#d8d8d8"/></svg>
<div class="a" style="left:895.5px;top:411.0px;width:8px;height:8px;border:1px solid #494949;border-radius:1px"></div>
<div class="a" style="left:911px;top:406px;width:24px;height:18px;background:#fff"></div>
<svg style="left:945px;top:406px" width="12" height="12" viewBox="0 0 12 12"><rect x=".5" y=".5" width="11" height="11" fill="#4a4a4a" stroke="#d8d8d8"/><path d="M3.500 2.500h5.500v7h-3.500l-2-2z" fill="#f4f4f4"/></svg>
<div class="t lt" style="left:960px;top:416px">Paper</div>


<!-- ===== taskbar ===== -->
<div class="a" style="left:0;top:532px;width:1000px;height:30px;background:linear-gradient(to right,#231416 0,#1f1012 8%,#22181b 30%,#1a1416 41%,#23131a 50%,#1d0e11 60%,#221517 72%,#1b0c0e 85%,#1a0b0d 100%)"></div>
<div class="a" style="left:376px;top:533px;width:54px;height:29px;background:radial-gradient(ellipse at 50% 60%,#0e1a1c 0,rgba(14,26,28,0) 70%)"></div>
<div class="a" style="left:560px;top:533px;width:150px;height:29px;background:radial-gradient(ellipse at 50% 50%,#2c1b1d 0,rgba(44,27,29,0) 70%)"></div>
<!-- start -->
<svg style="left:11px;top:541px" width="13.500" height="13" viewBox="0 0 16 15"><g fill="#fff"><path d="M0 2.200l6.300-.9v5.700H0zM7.200 1.200L15.500 0v7H7.200zM0 7.900h6.300v5.700L0 12.700zM7.200 7.900h8.300v7l-8.300-1.200z"/></g></svg>
<!-- search -->
<div class="a" style="left:35px;top:533px;width:211px;height:29px;background:#f2f2f2"></div>
<svg style="left:44px;top:540px" width="14" height="14" viewBox="0 0 14 14"><circle cx="8.300" cy="5.300" r="3.800" fill="none" stroke="#333" stroke-width="1.200"/><path d="M5.600 8L1.200 12.500" stroke="#333" stroke-width="1.300"/></svg>
<div class="t nx" style="left:65px;top:541.500px;font-size:12px;color:#4a4a4a;letter-spacing:-0.15px">Type here to search</div>
<svg style="left:192px;top:536px" width="54" height="24" viewBox="0 0 54 24"><path d="M19 2c1 5.500 2.500 7 8 8-5.500 1-7 2.500-8 8-1-5.500-2.500-7-8-8 5.500-1 7-2.500 8-8z" fill="#f6b81c"/><path d="M36 9c.5 2.800 1.300 3.600 4 4-2.700.4-3.500 1.200-4 4-.5-2.800-1.300-3.600-4-4 2.700-.4 3.500-1.200 4-4z" fill="#f8c838"/><path d="M6 13c.4 2.200 1 2.800 3.200 3.200C7 16.600 6.400 17.200 6 19.400 5.600 17.200 5 16.600 2.800 16.200 5 15.800 5.600 15.200 6 13z" fill="#2aa7d8"/><circle cx="30.500" cy="4.500" r="1.100" fill="#e8823a"/><circle cx="42" cy="18.500" r="1.200" fill="#7cc04a"/></svg>
<!-- task view -->
<svg style="left:256px;top:540px" width="15" height="14" viewBox="0 0 15 14"><g fill="none" stroke="#f0f0f0" stroke-width="1.300"><rect x="3.500" y="3.500" width="6.500" height="7"/><path d="M1.500 1.500h10M1.500 12.500h10"/></g><rect x="11.600" y="3.500" width="1.800" height="1.800" fill="#f0f0f0"/><rect x="11.600" y="6.500" width="1.800" height="4" fill="#f0f0f0"/></svg>
<!-- copilot -->
<svg style="left:291px;top:539px" width="19" height="17" viewBox="0 0 19 17"><defs><linearGradient id="cp1" x1="0" y1="0" x2="0.300" y2="1"><stop offset="0" stop-color="#3aa0f0"/><stop offset=".55" stop-color="#30c0b0"/><stop offset="1" stop-color="#e8d040"/></linearGradient><linearGradient id="cp2" x1="0.700" y1="0" x2="0.300" y2="1"><stop offset="0" stop-color="#b060f0"/><stop offset=".5" stop-color="#e850a8"/><stop offset="1" stop-color="#f88838"/></linearGradient></defs><path d="M5.500 1.500h5c1.500 0 2 1 1.600 2.200L9.500 13c-.4 1.500-1.300 2.500-2.800 2.500H4c-2.200 0-3.200-1.600-2.600-3.600L3 5c.5-2.200 1.200-3.500 2.500-3.500z" fill="url(#cp1)"/><path d="M10 3h4.500c2.200 0 3.400 1.600 2.800 3.600L16 11.500c-.6 2.200-1.600 3.500-3.200 4H8c1.400-.2 2-1 2.400-2.400L12 6.500c.4-1.600-.2-3-2-3.500z" fill="url(#cp2)"/><path d="M8.500 5.500c1-.8 2.500-.5 2.800.8L10 11c-.8.800-2 .6-2.500-.5z" fill="#f4c8e8" opacity=".55"/></svg>
<!-- word -->
<div class="a" style="left:311px;top:533px;width:44px;height:29px;background:rgba(255,255,255,0.050)"></div>
<svg style="left:327px;top:539px" width="20" height="16" viewBox="0 0 20 16"><rect x="6" y="0.500" width="13" height="15" rx="1" fill="#2b7cd3"/><rect x="6" y="0.500" width="13" height="4" fill="#41a5ee"/><rect x="6" y="8" width="13" height="4" fill="#185abd"/><rect x="6" y="12" width="13" height="3.500" fill="#103f91"/><rect x="0.500" y="3.500" width="10" height="10" rx="1" fill="#185abd"/><text x="5.500" y="11.300" font-family="Liberation Sans, sans-serif" font-size="7.500" font-weight="bold" fill="#fff" text-anchor="middle">W</text></svg>
<!-- explorer -->
<svg style="left:363px;top:540px" width="19" height="15" viewBox="0 0 19 15"><path d="M1 2.500c0-.8.500-1.300 1.300-1.300h4.200l1.500 1.600h9c.8 0 1.300.5 1.300 1.300V13c0 .8-.5 1.300-1.300 1.300H2.300c-.8 0-1.300-.5-1.300-1.300z" fill="#f4b400"/><path d="M1 5h17.300v8c0 .8-.5 1.300-1.300 1.300H2.300c-.8 0-1.300-.5-1.300-1.300z" fill="#ffd24a"/><path d="M5.500 14.300V9.800h8v4.500" fill="none" stroke="#3a8ee6" stroke-width="2"/></svg>
<div class="a" style="left:358px;top:560px;width:29px;height:2px;background:#9ccaf2"></div>
<!-- chrome -->
<svg style="left:399px;top:538px" width="19" height="19" viewBox="0 0 19 19"><circle cx="9.500" cy="9.500" r="9" fill="#fbbc05"/><path d="M9.500 9.500L1.700 5A9 9 0 0 1 17.300 5z" fill="#ea4335"/><path d="M9.500 9.500L1.700 5A9 9 0 0 0 9.500 18.500l4-7z" fill="#34a853"/><path d="M9.500 9.500h8.300" stroke="#ea4335" stroke-width="0"/><circle cx="9.500" cy="9.500" r="4.300" fill="#fff"/><circle cx="9.500" cy="9.500" r="3.300" fill="#4285f4"/></svg>
<!-- spotify -->
<svg style="left:435px;top:538px" width="19" height="19" viewBox="0 0 19 19"><circle cx="9.500" cy="9.500" r="8.800" fill="#1ed760"/><path d="M4.500 6.800c3.500-1 7.300-.7 10.300.9M5 9.800c3-.8 6-.5 8.500.9M5.600 12.500c2.400-.6 4.800-.4 6.800.7" fill="none" stroke="#111" stroke-width="1.500" stroke-linecap="round"/></svg>
<!-- chrome with profile -->
<svg style="left:469px;top:538px" width="22" height="21" viewBox="0 0 22 21"><circle cx="9.500" cy="9.500" r="9" fill="#fbbc05"/><path d="M9.500 9.500L1.700 5A9 9 0 0 1 17.300 5z" fill="#ea4335"/><path d="M9.500 9.500L1.700 5A9 9 0 0 0 9.500 18.500l4-7z" fill="#34a853"/><circle cx="9.500" cy="9.500" r="4.300" fill="#fff"/><circle cx="9.500" cy="9.500" r="3.300" fill="#4285f4"/><circle cx="15" cy="14" r="5.300" fill="#cfd0f4"/><path d="M12.800 11.800l5 2.200-2.200.8-.8 2.200z" fill="#e03a3a"/></svg>
<div class="a" style="left:466px;top:560px;width:29px;height:2px;background:#9ccaf2"></div>
<!-- CSP -->
<div class="a" style="left:498px;top:533px;width:36px;height:29px;background:#4a4041"></div>
<div class="a" style="left:507.500px;top:539px;width:17px;height:17px;background:#f2f2f2"></div>
<svg style="left:507.500px;top:539px" width="17" height="17" viewBox="0 0 17 17"><path d="M6.500 13.500c2.500-1.500 3-3.500 1.500-4.200-2-.9-5-1.200-4.500-3.300.6-2.300 5.500-3 8.500-2 3 1 2.800 3.500.3 4.600-1.600.7-3.300.5-4.300 0" fill="none" stroke="#111" stroke-width="1.700" stroke-linecap="round"/></svg>
<div class="a" style="left:498px;top:560px;width:36px;height:2px;background:#9ccaf2"></div>
<!-- photos -->
<svg style="left:543px;top:538px" width="18" height="19" viewBox="0 0 18 19"><rect x="0.500" y="0.500" width="17" height="18" rx="2.500" fill="#2f7fe0"/><path d="M.5 15.500L9 6.500l8.500 8v2c0 1.400-1 2-2.500 2H3c-1.500 0-2.500-.6-2.500-2z" fill="#38b6f0"/><path d="M3.500 18.500L10 11l7.500 6.500c-.3.700-1.200 1-2.500 1z" fill="#7fd6fa"/><circle cx="13.500" cy="4.500" r="1.800" fill="#d8ecff"/></svg>
<div class="a" style="left:537px;top:560px;width:29px;height:2px;background:#9ccaf2"></div>
<!-- weather -->
<svg style="left:694px;top:538px" width="21" height="19" viewBox="0 0 21 19"><path d="M8.500 2.500a4.200 4.200 0 1 0 4.800 5.800 3.800 3.800 0 0 1-4.800-5.800z" fill="#f6c344"/><path d="M4.500 17.500a3.600 3.600 0 0 1-.4-7.200 5 5 0 0 1 9.300-.8 4 4 0 0 1 1.100 8z" fill="#cfe0f5"/><path d="M4.500 17.500a3.600 3.600 0 0 1-1.500-6.800c1 3 5 4.500 11.500 6.800z" fill="#b6cdec"/><circle cx="15.500" cy="4" r="3.200" fill="#d83b3b"/><text x="15.500" y="6" font-family="Liberation Sans, sans-serif" font-size="5" font-weight="bold" fill="#fff" text-anchor="middle">1</text></svg>
<div class="t nx" style="left:718.500px;top:542.500px;font-size:11px;color:#fff;letter-spacing:-0.300px">29°C</div>
<div class="t nx" style="left:746.500px;top:542.500px;font-size:11px;color:#fff;letter-spacing:-0.250px">Berawan</div>
<!-- tray -->
<svg style="left:802px;top:540px" width="112" height="16" viewBox="0 0 112 16"><g fill="none" stroke="#f0f0f0" stroke-width="1.100"><path d="M1.500 10l4-4 4 4"/><rect x="19.500" y="5.500" width="8.500" height="6" rx="0.500"/><path d="M29.500 7.500v2"/><circle cx="17.800" cy="5.500" r="1.600"/><path d="M17.800 7v4.500"/><rect x="38.500" y="4.500" width="5.500" height="7" rx="1"/><path d="M44 7l2-1v4l-2-1M38 2.500c2-1.300 5-1.300 7 0M38 13.500c2 1.300 5 1.300 7 0"/><path d="M56 11.500c-2-.3-2.500-3 0-3.600.5-2.500 4.500-3 5.500-.6 2.600 0 3 3.600.5 4.200z" fill="#9a9a9a" stroke="#9a9a9a"/><path d="M54.500 4.500l9 8" stroke="#e8e8e8"/><g transform="translate(-5,0)"><path d="M76 6.500h2l2.500-2.500v8L78 9.500h-2z"/><path d="M82.500 6a3 3 0 0 1 0 4M84.500 4.500a5 5 0 0 1 0 7"/></g><g transform="translate(-3.500,0)"><path d="M95 12.500c-1.500 1-3-.8-1.600-2.200l6.500-6.500c1.500-1.400 3.400.4 2 1.800l-5.500 5.500M96.500 9.500c2.500.5 4.500-.5 6-2M94 8.500c.5-2 2-3 4-3"/></g></g></svg>
<div class="t nx2" style="left:924.500px;top:536.500px;font-size:9.500px;color:#fff;letter-spacing:-0.1px">21:23</div>
<div class="t nx2" style="left:914px;top:549px;font-size:9.500px;color:#fff;letter-spacing:-0.2px">14/02/2025</div>
<svg style="left:969px;top:540px" width="14" height="14" viewBox="0 0 14 14"><path d="M1 1h12v9.500H9L7 12.500 5 10.500H1z" fill="#fff"/><path d="M3 3.800h8M3 6h8M3 8.200h5" stroke="#1b0d0f" stroke-width="0.900"/></svg>

</div></body></html>
